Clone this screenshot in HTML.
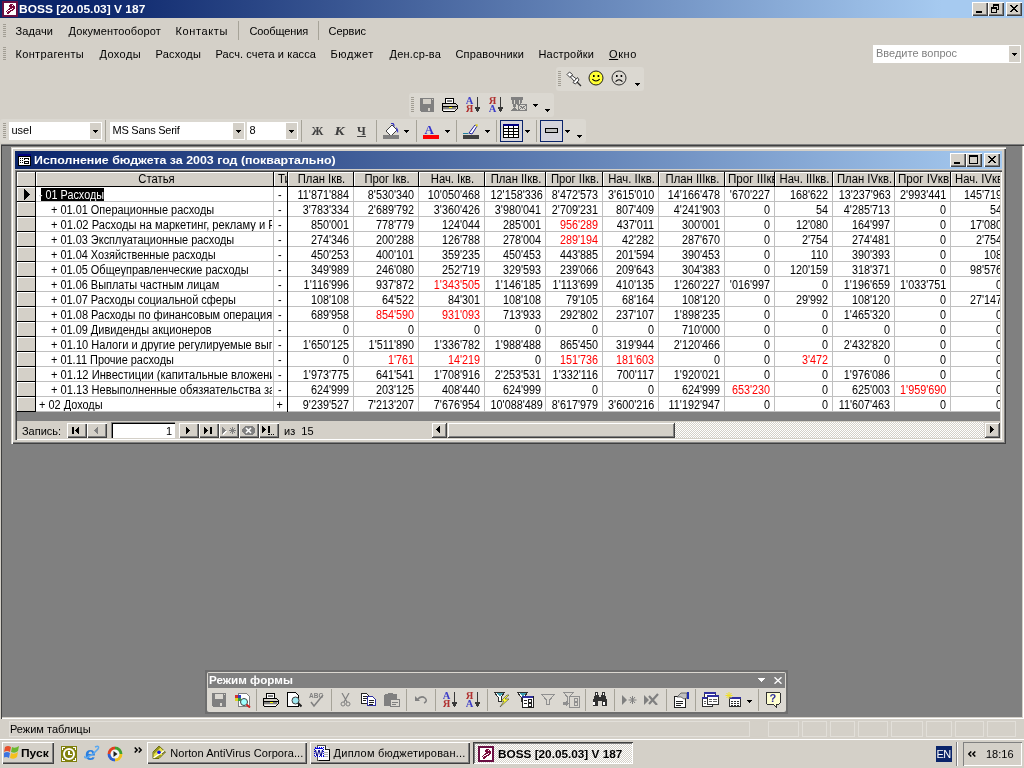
<!DOCTYPE html>
<html><head><meta charset="utf-8"><title>BOSS</title><style>
html,body{margin:0;padding:0}
body{width:1024px;height:768px;overflow:hidden;background:#d4d0c8;position:relative;font-family:"Liberation Sans",sans-serif;font-size:11px}
div,svg{position:absolute;box-sizing:border-box}
.t{white-space:pre}
#root{left:0;top:0;width:1024px;height:768px;will-change:transform;}
</style></head><body>
<div id="root">
<div style="left:0px;top:0px;width:1024px;height:18px;background:linear-gradient(90deg,#0a246a 0%,#0a246a 8%,#a6caf0 92%,#a6caf0 100%);"></div>
<svg style="left:2px;top:1px;" width="16" height="16" viewBox="0 0 16 16" shape-rendering="crispEdges"><rect x="0" y="0" width="16" height="16" fill="#6b0f43"/><rect x="2" y="2" width="12" height="12" fill="#fff"/>
<path d="M7 3h4v1h1v1h1v3h-1v1h-1v1h-2v1h-1v1h-1v1h-2v-1h-1v-2h1v-1h1v-1h1v-1h1v-1h-1v-2h1v-1h1z" fill="#7a0a3c"/>
<path d="M10 4h1v1h-1zM10 7h1v1h-1zM8 8h2v1h-2zM6 9h2v1h-2zM5 10h1v1h-1zM4 11h1v1h-1z" fill="#fff"/></svg>
<div class="t" style="left:19px;top:1.69px;font-size:11px;line-height:15px;color:#fff;font-weight:700;transform:scaleX(1.087);transform-origin:left center;">BOSS [20.05.03] V 187</div>
<div style="left:972px;top:2px;width:16px;height:14px;background:#d4d0c8;box-shadow:inset 1px 1px 0 #fff,inset -1px -1px 0 #404040,inset -2px -2px 0 #808080;"><svg style="left:0px;top:0px;" width="16" height="14" viewBox="0 0 16 14" shape-rendering="crispEdges"><rect x="4" y="9" width="6" height="2" fill="#000"/></svg></div>
<div style="left:988px;top:2px;width:16px;height:14px;background:#d4d0c8;box-shadow:inset 1px 1px 0 #fff,inset -1px -1px 0 #404040,inset -2px -2px 0 #808080;"><svg style="left:0px;top:0px;" width="16" height="14" viewBox="0 0 16 14" shape-rendering="crispEdges"><path d="M5 2h6v6h-2v-1h1v-3h-4v1h-1z" fill="#000"/><path d="M3 5h6v6h-6zM4 7v3h4v-3z" fill="#000" fill-rule="evenodd"/></svg></div>
<div style="left:1006px;top:2px;width:16px;height:14px;background:#d4d0c8;box-shadow:inset 1px 1px 0 #fff,inset -1px -1px 0 #404040,inset -2px -2px 0 #808080;"><svg style="left:0px;top:0px;" width="16" height="14" viewBox="0 0 16 14" shape-rendering="crispEdges"><path d="M4 3h2v1h1v1h2v-1h1v-1h2v1h-1v1h-1v1h-1v1h1v1h1v1h1v1h-2v-1h-1v-1h-2v1h-1v1h-2v-1h1v-1h1v-1h1v-1h-1v-1h-1v-1h-1z" fill="#000"/></svg></div>
<svg style="left:3px;top:24px;" width="3" height="14" viewBox="0 0 3 14" shape-rendering="crispEdges"><rect x="0" y="0" width="3" height="1" fill="#a19d93"/><rect x="0" y="2" width="3" height="1" fill="#a19d93"/><rect x="0" y="4" width="3" height="1" fill="#a19d93"/><rect x="0" y="6" width="3" height="1" fill="#a19d93"/><rect x="0" y="8" width="3" height="1" fill="#a19d93"/><rect x="0" y="10" width="3" height="1" fill="#a19d93"/><rect x="0" y="12" width="3" height="1" fill="#a19d93"/></svg>
<div class="t" style="left:15.5px;top:23.69px;font-size:11px;line-height:15px;color:#000;letter-spacing:0.094px;">Задачи</div>
<div class="t" style="left:68.5px;top:23.69px;font-size:11px;line-height:15px;color:#000;letter-spacing:0.142px;">Документооборот</div>
<div class="t" style="left:175.5px;top:23.69px;font-size:11px;line-height:15px;color:#000;letter-spacing:0.623px;">Контакты</div>
<div class="t" style="left:249.5px;top:23.69px;font-size:11px;line-height:15px;color:#000;letter-spacing:-0.134px;">Сообщения</div>
<div class="t" style="left:328.5px;top:23.69px;font-size:11px;line-height:15px;color:#000;letter-spacing:-0.028px;">Сервис</div>
<div style="left:238px;top:21px;width:1px;height:19px;background:#a6a398;"></div>
<div style="left:318px;top:21px;width:1px;height:19px;background:#a6a398;"></div>
<svg style="left:3px;top:47px;" width="3" height="14" viewBox="0 0 3 14" shape-rendering="crispEdges"><rect x="0" y="0" width="3" height="1" fill="#a19d93"/><rect x="0" y="2" width="3" height="1" fill="#a19d93"/><rect x="0" y="4" width="3" height="1" fill="#a19d93"/><rect x="0" y="6" width="3" height="1" fill="#a19d93"/><rect x="0" y="8" width="3" height="1" fill="#a19d93"/><rect x="0" y="10" width="3" height="1" fill="#a19d93"/><rect x="0" y="12" width="3" height="1" fill="#a19d93"/></svg>
<div class="t" style="left:15.5px;top:46.69px;font-size:11px;line-height:15px;color:#000;letter-spacing:0.338px;">Контрагенты</div>
<div class="t" style="left:99.5px;top:46.69px;font-size:11px;line-height:15px;color:#000;letter-spacing:0.392px;">Доходы</div>
<div class="t" style="left:155.5px;top:46.69px;font-size:11px;line-height:15px;color:#000;letter-spacing:0.19px;">Расходы</div>
<div class="t" style="left:215.5px;top:46.69px;font-size:11px;line-height:15px;color:#000;letter-spacing:0.092px;">Расч. счета и касса</div>
<div class="t" style="left:330.5px;top:46.69px;font-size:11px;line-height:15px;color:#000;letter-spacing:0.617px;">Бюджет</div>
<div class="t" style="left:389.5px;top:46.69px;font-size:11px;line-height:15px;color:#000;letter-spacing:0.187px;">Ден.ср-ва</div>
<div class="t" style="left:455.5px;top:46.69px;font-size:11px;line-height:15px;color:#000;letter-spacing:0.169px;">Справочники</div>
<div class="t" style="left:538.5px;top:46.69px;font-size:11px;line-height:15px;color:#000;letter-spacing:0.174px;">Настройки</div>
<div class="t" style="left:609px;top:46.69px;font-size:11px;line-height:15px;color:#000;letter-spacing:0.609px;"><u>О</u>кно</div>
<div style="left:873px;top:45px;width:148px;height:18px;background:#fff;"></div>
<div style="left:1009px;top:46px;width:11px;height:16px;background:#d4d0c8;"></div>
<svg style="left:1012px;top:53px;" width="5" height="3" viewBox="0 0 5 3" shape-rendering="crispEdges"><path d="M0 0h5v1h-5zM1 1h3v1h-3zM2 2h1v1h-1z" fill="#000"/></svg>
<div class="t" style="left:876px;top:45.69px;font-size:11px;line-height:15px;color:#808080;">Введите вопрос</div>
<div style="left:556px;top:67px;width:88px;height:24px;background:#dbd8d1;border-radius:3px;"></div>
<svg style="left:558px;top:71px;" width="3" height="16" viewBox="0 0 3 16" shape-rendering="crispEdges"><rect x="0" y="0" width="3" height="1" fill="#a19d93"/><rect x="0" y="2" width="3" height="1" fill="#a19d93"/><rect x="0" y="4" width="3" height="1" fill="#a19d93"/><rect x="0" y="6" width="3" height="1" fill="#a19d93"/><rect x="0" y="8" width="3" height="1" fill="#a19d93"/><rect x="0" y="10" width="3" height="1" fill="#a19d93"/><rect x="0" y="12" width="3" height="1" fill="#a19d93"/><rect x="0" y="14" width="3" height="1" fill="#a19d93"/></svg>
<svg style="left:566px;top:71px;" width="16" height="16" viewBox="0 0 16 16" shape-rendering="geometricPrecision"><path d="M1 3.500L3.500 1L6.500 3.500L4 6.500Z" fill="#fff" stroke="#404040" stroke-width="1"/><path d="M4.500 6L6 4.500L10.500 8L8.500 10.500Z" fill="#fff" stroke="#404040" stroke-width="1"/><path d="M7 11.500L11.500 6.500L13 9L9.500 13Z" fill="#fff" stroke="#404040" stroke-width="1"/><path d="M11 11l4 4" stroke="#303030" stroke-width="1.2" fill="none"/></svg>
<svg style="left:588px;top:70px;" width="16" height="16" viewBox="0 0 16 16" shape-rendering="geometricPrecision"><circle cx="8" cy="8" r="7" fill="#ffff33" stroke="#202020" stroke-width="1"/><rect x="5" y="5" width="1.6" height="2" fill="#000"/><rect x="9.6" y="5" width="1.6" height="2" fill="#000"/><path d="M4.3 9.2q3.7 3.6 7.4 0" fill="none" stroke="#000" stroke-width="1.1"/></svg>
<svg style="left:611px;top:70px;" width="16" height="16" viewBox="0 0 16 16" shape-rendering="geometricPrecision"><circle cx="8" cy="8" r="7" fill="none" stroke="#303030" stroke-width="1"/><rect x="5" y="5" width="1.6" height="2" fill="#000"/><rect x="9.6" y="5" width="1.6" height="2" fill="#000"/><path d="M4.6 11.6q3.4 -3.6 6.8 0" fill="none" stroke="#000" stroke-width="1.1"/></svg>
<svg style="left:635px;top:83px;" width="5" height="3" viewBox="0 0 5 3" shape-rendering="crispEdges"><path d="M0 0h5v1h-5zM1 1h3v1h-3zM2 2h1v1h-1z" fill="#000"/></svg>
<div style="left:409px;top:93px;width:145px;height:24px;background:#dbd8d1;border-radius:3px;"></div>
<svg style="left:411px;top:97px;" width="3" height="16" viewBox="0 0 3 16" shape-rendering="crispEdges"><rect x="0" y="0" width="3" height="1" fill="#a19d93"/><rect x="0" y="2" width="3" height="1" fill="#a19d93"/><rect x="0" y="4" width="3" height="1" fill="#a19d93"/><rect x="0" y="6" width="3" height="1" fill="#a19d93"/><rect x="0" y="8" width="3" height="1" fill="#a19d93"/><rect x="0" y="10" width="3" height="1" fill="#a19d93"/><rect x="0" y="12" width="3" height="1" fill="#a19d93"/><rect x="0" y="14" width="3" height="1" fill="#a19d93"/></svg>
<svg style="left:420px;top:98px;" width="14" height="14" viewBox="0 0 14 14" shape-rendering="crispEdges"><path d="M0 0h14v14h-13l-1-1z" fill="#808080"/><rect x="3" y="1" width="8" height="5" fill="#d4d0c8"/><rect x="3" y="9" width="8" height="5" fill="#808080"/><rect x="8" y="10" width="2" height="3" fill="#d4d0c8"/><rect x="12" y="1" width="1" height="1" fill="#d4d0c8"/></svg>
<svg style="left:442px;top:98px;" width="16" height="14" viewBox="0 0 16 14" shape-rendering="crispEdges"><path d="M4 0h8l-1 5h-8z" fill="#fff" stroke="#000" stroke-width="1"/><path d="M5 2h5M4.500 3.500h5" stroke="#808080"/>
<path d="M1 5h12l2 2v4l-2 2h-12l-1-1v-5z" fill="#d4d0c8" stroke="#000"/><path d="M0 8h15" stroke="#000"/><rect x="1" y="9" width="13" height="2" fill="#808080"/><rect x="7" y="9" width="3" height="1" fill="#ffff00"/><path d="M2 12h11" stroke="#fff"/></svg>
<svg style="left:466px;top:97px;" width="15" height="16" viewBox="0 0 15 16" shape-rendering="geometricPrecision"><text x="3.500" y="7" text-anchor="middle" font-family="Liberation Serif" font-weight="700" font-size="10.500" fill="#3c3cc8">A</text><text x="3.500" y="15" text-anchor="middle" font-family="Liberation Serif" font-weight="700" font-size="10.500" fill="#b03030">Я</text><path d="M11 0h1v11h-1zM9 10h5v1h-5zM9 11h5v1h-5zM10 12h3v1h-3zM10 13h3v1h-3zM11 14h1v1h-1z" fill="#383838" shape-rendering="crispEdges"/></svg>
<svg style="left:489px;top:97px;" width="15" height="16" viewBox="0 0 15 16" shape-rendering="geometricPrecision"><text x="3.500" y="7" text-anchor="middle" font-family="Liberation Serif" font-weight="700" font-size="10.500" fill="#b03030">Я</text><text x="3.500" y="15" text-anchor="middle" font-family="Liberation Serif" font-weight="700" font-size="10.500" fill="#3c3cc8">A</text><path d="M11 0h1v11h-1zM9 10h5v1h-5zM9 11h5v1h-5zM10 12h3v1h-3zM10 13h3v1h-3zM11 14h1v1h-1z" fill="#383838" shape-rendering="crispEdges"/></svg>
<svg style="left:511px;top:97px;" width="17" height="15" viewBox="0 0 17 15" shape-rendering="crispEdges"><path d="M0 0h12v3h-1l-1 7h-3l-1-5-1 5h-3l-1-7h-1z" fill="#808080"/><path d="M3 3h1v4h-1zM8 3h1v4h-1z" fill="#dbd8d1"/><path d="M0 14l3.500-4 3.500 4z" fill="#808080"/><rect x="7.500" y="7.500" width="8" height="6" fill="#dbd8d1" stroke="#808080"/><path d="M8 8l3.500 3 3.500-3M8 13l3-3M15 13l-3-3" stroke="#808080" fill="none"/></svg>
<svg style="left:533px;top:104px;" width="5" height="3" viewBox="0 0 5 3" shape-rendering="crispEdges"><path d="M0 0h5v1h-5zM1 1h3v1h-3zM2 2h1v1h-1z" fill="#000"/></svg>
<svg style="left:545px;top:109px;" width="5" height="3" viewBox="0 0 5 3" shape-rendering="crispEdges"><path d="M0 0h5v1h-5zM1 1h3v1h-3zM2 2h1v1h-1z" fill="#000"/></svg>
<div style="left:0px;top:119px;width:586px;height:24px;background:#dbd8d1;border-radius:3px;"></div>
<svg style="left:3px;top:123px;" width="3" height="16" viewBox="0 0 3 16" shape-rendering="crispEdges"><rect x="0" y="0" width="3" height="1" fill="#a19d93"/><rect x="0" y="2" width="3" height="1" fill="#a19d93"/><rect x="0" y="4" width="3" height="1" fill="#a19d93"/><rect x="0" y="6" width="3" height="1" fill="#a19d93"/><rect x="0" y="8" width="3" height="1" fill="#a19d93"/><rect x="0" y="10" width="3" height="1" fill="#a19d93"/><rect x="0" y="12" width="3" height="1" fill="#a19d93"/><rect x="0" y="14" width="3" height="1" fill="#a19d93"/></svg>
<div style="left:9px;top:122px;width:93px;height:18px;background:#fff;"></div><div style="left:90px;top:123px;width:11px;height:16px;background:#d4d0c8;"></div><svg style="left:93px;top:130px;" width="5" height="3" viewBox="0 0 5 3" shape-rendering="crispEdges"><path d="M0 0h5v1h-5zM1 1h3v1h-3zM2 2h1v1h-1z" fill="#000"/></svg><div class="t" style="left:11.5px;top:122.69px;font-size:11px;line-height:15px;color:#000;">usel</div>
<div style="left:105px;top:120px;width:1px;height:22px;background:#a6a398;"></div>
<div style="left:110px;top:122px;width:135px;height:18px;background:#fff;"></div><div style="left:233px;top:123px;width:11px;height:16px;background:#d4d0c8;"></div><svg style="left:236px;top:130px;" width="5" height="3" viewBox="0 0 5 3" shape-rendering="crispEdges"><path d="M0 0h5v1h-5zM1 1h3v1h-3zM2 2h1v1h-1z" fill="#000"/></svg><div class="t" style="left:112.5px;top:122.69px;font-size:11px;line-height:15px;color:#000;letter-spacing:-0.25px;">MS Sans Serif</div>
<div style="left:247px;top:122px;width:51px;height:18px;background:#fff;"></div><div style="left:286px;top:123px;width:11px;height:16px;background:#d4d0c8;"></div><svg style="left:289px;top:130px;" width="5" height="3" viewBox="0 0 5 3" shape-rendering="crispEdges"><path d="M0 0h5v1h-5zM1 1h3v1h-3zM2 2h1v1h-1z" fill="#000"/></svg><div class="t" style="left:249.5px;top:122.69px;font-size:11px;line-height:15px;color:#000;">8</div>
<div style="left:301px;top:120px;width:1px;height:22px;background:#a6a398;"></div>
<div class="t" style="left:311px;top:122.84px;font-size:12px;line-height:16px;color:#404040;font-weight:700;width:13px;text-align:center;font-family:'Liberation Serif';">Ж</div>
<div class="t" style="left:333px;top:122.00px;font-size:13px;line-height:17px;color:#404040;font-weight:700;font-style:italic;width:13px;text-align:center;transform:scaleX(1.15);transform-origin:center center;font-family:'Liberation Serif';">К</div>
<div class="t" style="left:355px;top:122.84px;font-size:12px;line-height:16px;color:#404040;font-weight:700;width:13px;text-align:center;font-family:'Liberation Serif';text-decoration:underline;">Ч</div>
<div style="left:376px;top:120px;width:1px;height:22px;background:#a6a398;"></div>
<svg style="left:383px;top:123px;" width="16" height="16" viewBox="0 0 16 16" shape-rendering="geometricPrecision"><path d="M3 8l6-6 5 5-6 6z" fill="#fff" stroke="#404040" stroke-width="1"/><path d="M8 0.500q3-1 3 3" fill="none" stroke="#3030c0" stroke-width="1.2"/><path d="M13 4q3 2 2 6q-2-2-2-6z" fill="#4040d0"/><rect x="0" y="12" width="16" height="4" fill="#808080"/></svg>
<svg style="left:404px;top:130px;" width="5" height="3" viewBox="0 0 5 3" shape-rendering="crispEdges"><path d="M0 0h5v1h-5zM1 1h3v1h-3zM2 2h1v1h-1z" fill="#000"/></svg>
<div style="left:416px;top:120px;width:1px;height:22px;background:#a6a398;"></div>
<svg style="left:423px;top:124px;" width="16" height="15" viewBox="0 0 16 15" shape-rendering="geometricPrecision"><text x="1.500" y="10" font-family="Liberation Serif" font-weight="700" font-size="13" fill="#3333cc">A</text><rect x="0" y="11" width="16" height="4" fill="#ff0000"/></svg>
<svg style="left:445px;top:130px;" width="5" height="3" viewBox="0 0 5 3" shape-rendering="crispEdges"><path d="M0 0h5v1h-5zM1 1h3v1h-3zM2 2h1v1h-1z" fill="#000"/></svg>
<div style="left:456px;top:120px;width:1px;height:22px;background:#a6a398;"></div>
<svg style="left:463px;top:124px;" width="16" height="15" viewBox="0 0 16 15" shape-rendering="geometricPrecision"><path d="M6 9l6-8 2 1-5 8z" fill="#fff" stroke="#2020a0" stroke-width="1"/><path d="M12 1l2-1 1 1-1 2z" fill="#e0d020"/><path d="M0 9h5l1 1h-6z" fill="#2080a0"/><rect x="0" y="11" width="16" height="4" fill="#404040"/></svg>
<svg style="left:485px;top:130px;" width="5" height="3" viewBox="0 0 5 3" shape-rendering="crispEdges"><path d="M0 0h5v1h-5zM1 1h3v1h-3zM2 2h1v1h-1z" fill="#000"/></svg>
<div style="left:496px;top:120px;width:1px;height:22px;background:#a6a398;"></div>
<div style="left:500px;top:120px;width:23px;height:22px;background:#d6d5dc;border:1px solid #0a246a;"></div>
<svg style="left:503px;top:124px;" width="16" height="14" viewBox="0 0 16 14" shape-rendering="crispEdges"><rect x="0" y="0" width="16" height="14" fill="#000"/><rect x="0" y="0" width="16" height="2" fill="#000080"/><rect x="1" y="2" width="4" height="2" fill="#fff"/><rect x="6" y="2" width="4" height="2" fill="#fff"/><rect x="11" y="2" width="4" height="2" fill="#fff"/><rect x="1" y="5" width="4" height="2" fill="#fff"/><rect x="6" y="5" width="4" height="2" fill="#fff"/><rect x="11" y="5" width="4" height="2" fill="#fff"/><rect x="1" y="8" width="4" height="2" fill="#fff"/><rect x="6" y="8" width="4" height="2" fill="#fff"/><rect x="11" y="8" width="4" height="2" fill="#fff"/><rect x="1" y="11" width="4" height="2" fill="#fff"/><rect x="6" y="11" width="4" height="2" fill="#fff"/><rect x="11" y="11" width="4" height="2" fill="#fff"/></svg>
<svg style="left:525px;top:130px;" width="5" height="3" viewBox="0 0 5 3" shape-rendering="crispEdges"><path d="M0 0h5v1h-5zM1 1h3v1h-3zM2 2h1v1h-1z" fill="#000"/></svg>
<div style="left:536px;top:120px;width:1px;height:22px;background:#a6a398;"></div>
<div style="left:540px;top:120px;width:23px;height:22px;background:#d6d5dc;border:1px solid #0a246a;"></div>
<div style="left:545px;top:128px;width:13px;height:5px;background:#c0c0c0;border:1px solid #000;"></div>
<svg style="left:565px;top:130px;" width="5" height="3" viewBox="0 0 5 3" shape-rendering="crispEdges"><path d="M0 0h5v1h-5zM1 1h3v1h-3zM2 2h1v1h-1z" fill="#000"/></svg>
<svg style="left:577px;top:135px;" width="5" height="3" viewBox="0 0 5 3" shape-rendering="crispEdges"><path d="M0 0h5v1h-5zM1 1h3v1h-3zM2 2h1v1h-1z" fill="#000"/></svg>
<div style="left:0px;top:143px;width:1024px;height:1px;background:#d4d0c8;"></div>
<div style="left:0px;top:144px;width:1024px;height:575px;background:#808080;box-shadow:inset 1px 1px 0 #808080,inset 2px 2px 0 #404040,inset -1px -1px 0 #fff,inset -2px -2px 0 #d4d0c8;"></div>
<div style="left:0px;top:144px;width:1px;height:575px;background:#d4d0c8;"></div>
<div style="left:11px;top:147px;width:995px;height:297px;background:#d4d0c8;box-shadow:inset 1px 1px 0 #d4d0c8,inset 2px 2px 0 #fff,inset -1px -1px 0 #404040,inset -2px -2px 0 #808080;"></div>
<div style="left:15px;top:151px;width:987px;height:18px;background:linear-gradient(90deg,#0a246a 0%,#a6caf0 100%);"></div>
<svg style="left:18px;top:154px;" width="13" height="12" viewBox="0 0 13 12" shape-rendering="crispEdges"><rect x="0" y="0" width="13" height="12" fill="#000"/><rect x="0" y="0" width="13" height="2" fill="#000080"/><rect x="1" y="3" width="11" height="8" fill="#fff"/>
<path d="M2 4h3v1h-3zM2 6h3v1h-3zM2 8h3v1h-3z" fill="#000"/><path d="M3 4h1v1h-1zM3 6h1v1h-1zM3 8h1v1h-1z" fill="#fff"/>
<rect x="6" y="4" width="5" height="2" fill="#000"/><rect x="7" y="4.500" width="3" height="1" fill="#fff"/><rect x="6" y="7" width="5" height="3" fill="#000"/><rect x="7" y="8" width="3" height="1" fill="#fff"/></svg>
<div class="t" style="left:34px;top:152.69px;font-size:11px;line-height:15px;color:#fff;font-weight:700;transform:scaleX(1.126);transform-origin:left center;">Исполнение бюджета за 2003 год (поквартально)</div>
<div style="left:950px;top:153px;width:16px;height:14px;background:#d4d0c8;box-shadow:inset 1px 1px 0 #fff,inset -1px -1px 0 #404040,inset -2px -2px 0 #808080;"><svg style="left:0px;top:0px;" width="16" height="14" viewBox="0 0 16 14" shape-rendering="crispEdges"><rect x="4" y="9" width="6" height="2" fill="#000"/></svg></div>
<div style="left:966px;top:153px;width:16px;height:14px;background:#d4d0c8;box-shadow:inset 1px 1px 0 #fff,inset -1px -1px 0 #404040,inset -2px -2px 0 #808080;"><svg style="left:0px;top:0px;" width="16" height="14" viewBox="0 0 16 14" shape-rendering="crispEdges"><path d="M3 2h9v9h-9zM4 4v6h7v-6z" fill="#000" fill-rule="evenodd"/></svg></div>
<div style="left:984px;top:153px;width:16px;height:14px;background:#d4d0c8;box-shadow:inset 1px 1px 0 #fff,inset -1px -1px 0 #404040,inset -2px -2px 0 #808080;"><svg style="left:0px;top:0px;" width="16" height="14" viewBox="0 0 16 14" shape-rendering="crispEdges"><path d="M4 3h2v1h1v1h2v-1h1v-1h2v1h-1v1h-1v1h-1v1h1v1h1v1h1v1h-2v-1h-1v-1h-2v1h-1v1h-2v-1h1v-1h1v-1h1v-1h-1v-1h-1v-1h-1z" fill="#000"/></svg></div>
<div style="left:15px;top:170px;width:987px;height:270px;box-shadow:inset 1px 1px 0 #808080,inset 2px 2px 0 #404040,inset -1px -1px 0 #fff,inset -2px -2px 0 #d4d0c8;"></div>
<div style="left:17px;top:172px;width:983px;height:249px;overflow:hidden;"><div style="left:19px;top:15px;width:964px;height:225px;background:#fff;"></div><div style="left:0px;top:240px;width:983px;height:9px;background:#808080;"></div><div style="left:0px;top:0px;width:983px;height:15px;background:#000;"></div><div style="left:0px;top:0px;width:18px;height:14px;background:#d4d0c8;box-shadow:inset 1px 1px 0 #fff;"></div><div style="left:19px;top:0px;width:237px;height:14px;background:#d4d0c8;box-shadow:inset 1px 1px 0 #fff;overflow:hidden;"></div><div style="left:19px;top:0px;width:237px;height:14px;overflow:hidden;"><div class="t" style="left:2px;top:-1.16px;font-size:12px;line-height:16px;color:#000;width:237px;text-align:center;transform:scaleX(0.94);transform-origin:center center;">Статья</div></div><div style="left:257px;top:0px;width:13px;height:14px;background:#d4d0c8;box-shadow:inset 1px 1px 0 #fff;overflow:hidden;"></div><div style="left:257px;top:0px;width:13px;height:14px;overflow:hidden;"><div class="t" style="left:4px;top:-1.16px;font-size:12px;line-height:16px;color:#000;transform:scaleX(0.94);transform-origin:left center;">Ти</div></div><div style="left:271px;top:0px;width:65px;height:14px;background:#d4d0c8;box-shadow:inset 1px 1px 0 #fff;overflow:hidden;"></div><div style="left:271px;top:0px;width:65px;height:14px;overflow:hidden;"><div class="t" style="left:0.5px;top:-1.16px;font-size:12px;line-height:16px;color:#000;width:65px;text-align:center;transform:scaleX(0.94);transform-origin:center center;">План Iкв.</div></div><div style="left:337px;top:0px;width:64px;height:14px;background:#d4d0c8;box-shadow:inset 1px 1px 0 #fff;overflow:hidden;"></div><div style="left:337px;top:0px;width:64px;height:14px;overflow:hidden;"><div class="t" style="left:0.5px;top:-1.16px;font-size:12px;line-height:16px;color:#000;width:64px;text-align:center;transform:scaleX(0.94);transform-origin:center center;">Прог Iкв.</div></div><div style="left:402px;top:0px;width:65px;height:14px;background:#d4d0c8;box-shadow:inset 1px 1px 0 #fff;overflow:hidden;"></div><div style="left:402px;top:0px;width:65px;height:14px;overflow:hidden;"><div class="t" style="left:0.5px;top:-1.16px;font-size:12px;line-height:16px;color:#000;width:65px;text-align:center;transform:scaleX(0.94);transform-origin:center center;">Нач. Iкв.</div></div><div style="left:468px;top:0px;width:60px;height:14px;background:#d4d0c8;box-shadow:inset 1px 1px 0 #fff;overflow:hidden;"></div><div style="left:468px;top:0px;width:60px;height:14px;overflow:hidden;"><div class="t" style="left:0.5px;top:-1.16px;font-size:12px;line-height:16px;color:#000;width:60px;text-align:center;transform:scaleX(0.94);transform-origin:center center;">План IIкв.</div></div><div style="left:529px;top:0px;width:56px;height:14px;background:#d4d0c8;box-shadow:inset 1px 1px 0 #fff;overflow:hidden;"></div><div style="left:529px;top:0px;width:56px;height:14px;overflow:hidden;"><div class="t" style="left:0.5px;top:-1.16px;font-size:12px;line-height:16px;color:#000;width:56px;text-align:center;transform:scaleX(0.94);transform-origin:center center;">Прог IIкв.</div></div><div style="left:586px;top:0px;width:55px;height:14px;background:#d4d0c8;box-shadow:inset 1px 1px 0 #fff;overflow:hidden;"></div><div style="left:586px;top:0px;width:55px;height:14px;overflow:hidden;"><div class="t" style="left:0.5px;top:-1.16px;font-size:12px;line-height:16px;color:#000;width:55px;text-align:center;transform:scaleX(0.94);transform-origin:center center;">Нач. IIкв.</div></div><div style="left:642px;top:0px;width:65px;height:14px;background:#d4d0c8;box-shadow:inset 1px 1px 0 #fff;overflow:hidden;"></div><div style="left:642px;top:0px;width:65px;height:14px;overflow:hidden;"><div class="t" style="left:0.5px;top:-1.16px;font-size:12px;line-height:16px;color:#000;width:65px;text-align:center;transform:scaleX(0.94);transform-origin:center center;">План IIIкв.</div></div><div style="left:708px;top:0px;width:49px;height:14px;background:#d4d0c8;box-shadow:inset 1px 1px 0 #fff;overflow:hidden;"></div><div style="left:708px;top:0px;width:49px;height:14px;overflow:hidden;"><div class="t" style="left:3px;top:-1.16px;font-size:12px;line-height:16px;color:#000;transform:scaleX(0.97);transform-origin:left center;">Прог IIIкв.</div></div><div style="left:758px;top:0px;width:57px;height:14px;background:#d4d0c8;box-shadow:inset 1px 1px 0 #fff;overflow:hidden;"></div><div style="left:758px;top:0px;width:57px;height:14px;overflow:hidden;"><div class="t" style="left:0.5px;top:-1.16px;font-size:12px;line-height:16px;color:#000;width:57px;text-align:center;transform:scaleX(0.94);transform-origin:center center;">Нач. IIIкв.</div></div><div style="left:816px;top:0px;width:61px;height:14px;background:#d4d0c8;box-shadow:inset 1px 1px 0 #fff;overflow:hidden;"></div><div style="left:816px;top:0px;width:61px;height:14px;overflow:hidden;"><div class="t" style="left:0.5px;top:-1.16px;font-size:12px;line-height:16px;color:#000;width:61px;text-align:center;transform:scaleX(0.94);transform-origin:center center;">План IVкв.</div></div><div style="left:878px;top:0px;width:55px;height:14px;background:#d4d0c8;box-shadow:inset 1px 1px 0 #fff;overflow:hidden;"></div><div style="left:878px;top:0px;width:55px;height:14px;overflow:hidden;"><div class="t" style="left:3px;top:-1.16px;font-size:12px;line-height:16px;color:#000;transform:scaleX(0.97);transform-origin:left center;">Прог IVкв.</div></div><div style="left:934px;top:0px;width:55px;height:14px;background:#d4d0c8;box-shadow:inset 1px 1px 0 #fff;overflow:hidden;"></div><div style="left:934px;top:0px;width:55px;height:14px;overflow:hidden;"><div class="t" style="left:4px;top:-1.16px;font-size:12px;line-height:16px;color:#000;transform:scaleX(0.94);transform-origin:left center;">Нач. IVкв.</div></div><div style="left:0px;top:15px;width:18px;height:15px;background:#000;"></div><div style="left:0px;top:15px;width:18px;height:14px;background:#d4d0c8;box-shadow:inset 1px 1px 0 #fff;"></div><div style="left:19px;top:29px;width:964px;height:1px;background:#c0c0c0;"></div><div style="left:19px;top:15px;width:236px;height:14px;overflow:hidden;"><div class="t" style="left:3px;top:-0.16px;font-size:12px;line-height:16px;color:#000;transform:scaleX(0.9);transform-origin:left center;">-</div><div style="left:5px;top:1px;width:63px;height:13px;background:#000;"></div><div class="t" style="left:3px;top:-0.16px;font-size:12px;line-height:16px;color:#fff;transform:scaleX(0.9);transform-origin:left center;">- 01 Расходы</div></div><div class="t" style="left:257px;top:14.84px;font-size:12px;line-height:16px;color:#000;width:11.5px;text-align:center;transform:scaleX(0.9);transform-origin:center center;">-</div><div style="left:271px;top:15px;width:65px;height:14px;overflow:hidden;"><div class="t" style="left:0px;top:-0.16px;font-size:12px;line-height:16px;color:#000;width:61px;text-align:right;transform:scaleX(0.9);transform-origin:right center;">11&#39;871&#39;884</div></div><div style="left:337px;top:15px;width:64px;height:14px;overflow:hidden;"><div class="t" style="left:0px;top:-0.16px;font-size:12px;line-height:16px;color:#000;width:60px;text-align:right;transform:scaleX(0.9);transform-origin:right center;">8&#39;530&#39;340</div></div><div style="left:402px;top:15px;width:65px;height:14px;overflow:hidden;"><div class="t" style="left:0px;top:-0.16px;font-size:12px;line-height:16px;color:#000;width:61px;text-align:right;transform:scaleX(0.9);transform-origin:right center;">10&#39;050&#39;468</div></div><div style="left:468px;top:15px;width:60px;height:14px;overflow:hidden;"><div class="t" style="left:0px;top:-0.16px;font-size:12px;line-height:16px;color:#000;width:56px;text-align:right;transform:scaleX(0.9);transform-origin:right center;">12&#39;158&#39;336</div></div><div style="left:529px;top:15px;width:56px;height:14px;overflow:hidden;"><div class="t" style="left:0px;top:-0.16px;font-size:12px;line-height:16px;color:#000;width:52px;text-align:right;transform:scaleX(0.9);transform-origin:right center;">8&#39;472&#39;573</div></div><div style="left:586px;top:15px;width:55px;height:14px;overflow:hidden;"><div class="t" style="left:0px;top:-0.16px;font-size:12px;line-height:16px;color:#000;width:51px;text-align:right;transform:scaleX(0.9);transform-origin:right center;">3&#39;615&#39;010</div></div><div style="left:642px;top:15px;width:65px;height:14px;overflow:hidden;"><div class="t" style="left:0px;top:-0.16px;font-size:12px;line-height:16px;color:#000;width:61px;text-align:right;transform:scaleX(0.9);transform-origin:right center;">14&#39;166&#39;478</div></div><div style="left:708px;top:15px;width:49px;height:14px;overflow:hidden;"><div class="t" style="left:0px;top:-0.16px;font-size:12px;line-height:16px;color:#000;width:45px;text-align:right;transform:scaleX(0.9);transform-origin:right center;">&#39;670&#39;227</div></div><div style="left:758px;top:15px;width:57px;height:14px;overflow:hidden;"><div class="t" style="left:0px;top:-0.16px;font-size:12px;line-height:16px;color:#000;width:53px;text-align:right;transform:scaleX(0.9);transform-origin:right center;">168&#39;622</div></div><div style="left:816px;top:15px;width:61px;height:14px;overflow:hidden;"><div class="t" style="left:0px;top:-0.16px;font-size:12px;line-height:16px;color:#000;width:57px;text-align:right;transform:scaleX(0.9);transform-origin:right center;">13&#39;237&#39;963</div></div><div style="left:878px;top:15px;width:55px;height:14px;overflow:hidden;"><div class="t" style="left:0px;top:-0.16px;font-size:12px;line-height:16px;color:#000;width:51px;text-align:right;transform:scaleX(0.9);transform-origin:right center;">2&#39;993&#39;441</div></div><div style="left:934px;top:15px;width:55px;height:14px;overflow:hidden;"><div class="t" style="left:0px;top:-0.16px;font-size:12px;line-height:16px;color:#000;width:51px;text-align:right;transform:scaleX(0.9);transform-origin:right center;">145&#39;719</div></div><div style="left:0px;top:30px;width:18px;height:15px;background:#000;"></div><div style="left:0px;top:30px;width:18px;height:14px;background:#d4d0c8;box-shadow:inset 1px 1px 0 #fff;"></div><div style="left:19px;top:44px;width:964px;height:1px;background:#c0c0c0;"></div><div style="left:19px;top:30px;width:236px;height:14px;overflow:hidden;"><div class="t" style="left:15px;top:-0.16px;font-size:12px;line-height:16px;color:#000;transform:scaleX(0.912);transform-origin:left center;">+ 01.01 Операционные расходы</div></div><div class="t" style="left:257px;top:29.84px;font-size:12px;line-height:16px;color:#000;width:11.5px;text-align:center;transform:scaleX(0.9);transform-origin:center center;">-</div><div style="left:271px;top:30px;width:65px;height:14px;overflow:hidden;"><div class="t" style="left:0px;top:-0.16px;font-size:12px;line-height:16px;color:#000;width:61px;text-align:right;transform:scaleX(0.9);transform-origin:right center;">3&#39;783&#39;334</div></div><div style="left:337px;top:30px;width:64px;height:14px;overflow:hidden;"><div class="t" style="left:0px;top:-0.16px;font-size:12px;line-height:16px;color:#000;width:60px;text-align:right;transform:scaleX(0.9);transform-origin:right center;">2&#39;689&#39;792</div></div><div style="left:402px;top:30px;width:65px;height:14px;overflow:hidden;"><div class="t" style="left:0px;top:-0.16px;font-size:12px;line-height:16px;color:#000;width:61px;text-align:right;transform:scaleX(0.9);transform-origin:right center;">3&#39;360&#39;426</div></div><div style="left:468px;top:30px;width:60px;height:14px;overflow:hidden;"><div class="t" style="left:0px;top:-0.16px;font-size:12px;line-height:16px;color:#000;width:56px;text-align:right;transform:scaleX(0.9);transform-origin:right center;">3&#39;980&#39;041</div></div><div style="left:529px;top:30px;width:56px;height:14px;overflow:hidden;"><div class="t" style="left:0px;top:-0.16px;font-size:12px;line-height:16px;color:#000;width:52px;text-align:right;transform:scaleX(0.9);transform-origin:right center;">2&#39;709&#39;231</div></div><div style="left:586px;top:30px;width:55px;height:14px;overflow:hidden;"><div class="t" style="left:0px;top:-0.16px;font-size:12px;line-height:16px;color:#000;width:51px;text-align:right;transform:scaleX(0.9);transform-origin:right center;">807&#39;409</div></div><div style="left:642px;top:30px;width:65px;height:14px;overflow:hidden;"><div class="t" style="left:0px;top:-0.16px;font-size:12px;line-height:16px;color:#000;width:61px;text-align:right;transform:scaleX(0.9);transform-origin:right center;">4&#39;241&#39;903</div></div><div style="left:708px;top:30px;width:49px;height:14px;overflow:hidden;"><div class="t" style="left:0px;top:-0.16px;font-size:12px;line-height:16px;color:#000;width:45px;text-align:right;transform:scaleX(0.9);transform-origin:right center;">0</div></div><div style="left:758px;top:30px;width:57px;height:14px;overflow:hidden;"><div class="t" style="left:0px;top:-0.16px;font-size:12px;line-height:16px;color:#000;width:53px;text-align:right;transform:scaleX(0.9);transform-origin:right center;">54</div></div><div style="left:816px;top:30px;width:61px;height:14px;overflow:hidden;"><div class="t" style="left:0px;top:-0.16px;font-size:12px;line-height:16px;color:#000;width:57px;text-align:right;transform:scaleX(0.9);transform-origin:right center;">4&#39;285&#39;713</div></div><div style="left:878px;top:30px;width:55px;height:14px;overflow:hidden;"><div class="t" style="left:0px;top:-0.16px;font-size:12px;line-height:16px;color:#000;width:51px;text-align:right;transform:scaleX(0.9);transform-origin:right center;">0</div></div><div style="left:934px;top:30px;width:55px;height:14px;overflow:hidden;"><div class="t" style="left:0px;top:-0.16px;font-size:12px;line-height:16px;color:#000;width:51px;text-align:right;transform:scaleX(0.9);transform-origin:right center;">54</div></div><div style="left:0px;top:45px;width:18px;height:15px;background:#000;"></div><div style="left:0px;top:45px;width:18px;height:14px;background:#d4d0c8;box-shadow:inset 1px 1px 0 #fff;"></div><div style="left:19px;top:59px;width:964px;height:1px;background:#c0c0c0;"></div><div style="left:19px;top:45px;width:236px;height:14px;overflow:hidden;"><div class="t" style="left:15px;top:-0.16px;font-size:12px;line-height:16px;color:#000;transform:scaleX(0.93);transform-origin:left center;">+ 01.02 Расходы на маркетинг, рекламу и PR</div></div><div class="t" style="left:257px;top:44.84px;font-size:12px;line-height:16px;color:#000;width:11.5px;text-align:center;transform:scaleX(0.9);transform-origin:center center;">-</div><div style="left:271px;top:45px;width:65px;height:14px;overflow:hidden;"><div class="t" style="left:0px;top:-0.16px;font-size:12px;line-height:16px;color:#000;width:61px;text-align:right;transform:scaleX(0.9);transform-origin:right center;">850&#39;001</div></div><div style="left:337px;top:45px;width:64px;height:14px;overflow:hidden;"><div class="t" style="left:0px;top:-0.16px;font-size:12px;line-height:16px;color:#000;width:60px;text-align:right;transform:scaleX(0.9);transform-origin:right center;">778&#39;779</div></div><div style="left:402px;top:45px;width:65px;height:14px;overflow:hidden;"><div class="t" style="left:0px;top:-0.16px;font-size:12px;line-height:16px;color:#000;width:61px;text-align:right;transform:scaleX(0.9);transform-origin:right center;">124&#39;044</div></div><div style="left:468px;top:45px;width:60px;height:14px;overflow:hidden;"><div class="t" style="left:0px;top:-0.16px;font-size:12px;line-height:16px;color:#000;width:56px;text-align:right;transform:scaleX(0.9);transform-origin:right center;">285&#39;001</div></div><div style="left:529px;top:45px;width:56px;height:14px;overflow:hidden;"><div class="t" style="left:0px;top:-0.16px;font-size:12px;line-height:16px;color:#ff0000;width:52px;text-align:right;transform:scaleX(0.9);transform-origin:right center;">956&#39;289</div></div><div style="left:586px;top:45px;width:55px;height:14px;overflow:hidden;"><div class="t" style="left:0px;top:-0.16px;font-size:12px;line-height:16px;color:#000;width:51px;text-align:right;transform:scaleX(0.9);transform-origin:right center;">437&#39;011</div></div><div style="left:642px;top:45px;width:65px;height:14px;overflow:hidden;"><div class="t" style="left:0px;top:-0.16px;font-size:12px;line-height:16px;color:#000;width:61px;text-align:right;transform:scaleX(0.9);transform-origin:right center;">300&#39;001</div></div><div style="left:708px;top:45px;width:49px;height:14px;overflow:hidden;"><div class="t" style="left:0px;top:-0.16px;font-size:12px;line-height:16px;color:#000;width:45px;text-align:right;transform:scaleX(0.9);transform-origin:right center;">0</div></div><div style="left:758px;top:45px;width:57px;height:14px;overflow:hidden;"><div class="t" style="left:0px;top:-0.16px;font-size:12px;line-height:16px;color:#000;width:53px;text-align:right;transform:scaleX(0.9);transform-origin:right center;">12&#39;080</div></div><div style="left:816px;top:45px;width:61px;height:14px;overflow:hidden;"><div class="t" style="left:0px;top:-0.16px;font-size:12px;line-height:16px;color:#000;width:57px;text-align:right;transform:scaleX(0.9);transform-origin:right center;">164&#39;997</div></div><div style="left:878px;top:45px;width:55px;height:14px;overflow:hidden;"><div class="t" style="left:0px;top:-0.16px;font-size:12px;line-height:16px;color:#000;width:51px;text-align:right;transform:scaleX(0.9);transform-origin:right center;">0</div></div><div style="left:934px;top:45px;width:55px;height:14px;overflow:hidden;"><div class="t" style="left:0px;top:-0.16px;font-size:12px;line-height:16px;color:#000;width:51px;text-align:right;transform:scaleX(0.9);transform-origin:right center;">17&#39;080</div></div><div style="left:0px;top:60px;width:18px;height:15px;background:#000;"></div><div style="left:0px;top:60px;width:18px;height:14px;background:#d4d0c8;box-shadow:inset 1px 1px 0 #fff;"></div><div style="left:19px;top:74px;width:964px;height:1px;background:#c0c0c0;"></div><div style="left:19px;top:60px;width:236px;height:14px;overflow:hidden;"><div class="t" style="left:15px;top:-0.16px;font-size:12px;line-height:16px;color:#000;transform:scaleX(0.912);transform-origin:left center;">+ 01.03 Эксплуатационные расходы</div></div><div class="t" style="left:257px;top:59.84px;font-size:12px;line-height:16px;color:#000;width:11.5px;text-align:center;transform:scaleX(0.9);transform-origin:center center;">-</div><div style="left:271px;top:60px;width:65px;height:14px;overflow:hidden;"><div class="t" style="left:0px;top:-0.16px;font-size:12px;line-height:16px;color:#000;width:61px;text-align:right;transform:scaleX(0.9);transform-origin:right center;">274&#39;346</div></div><div style="left:337px;top:60px;width:64px;height:14px;overflow:hidden;"><div class="t" style="left:0px;top:-0.16px;font-size:12px;line-height:16px;color:#000;width:60px;text-align:right;transform:scaleX(0.9);transform-origin:right center;">200&#39;288</div></div><div style="left:402px;top:60px;width:65px;height:14px;overflow:hidden;"><div class="t" style="left:0px;top:-0.16px;font-size:12px;line-height:16px;color:#000;width:61px;text-align:right;transform:scaleX(0.9);transform-origin:right center;">126&#39;788</div></div><div style="left:468px;top:60px;width:60px;height:14px;overflow:hidden;"><div class="t" style="left:0px;top:-0.16px;font-size:12px;line-height:16px;color:#000;width:56px;text-align:right;transform:scaleX(0.9);transform-origin:right center;">278&#39;004</div></div><div style="left:529px;top:60px;width:56px;height:14px;overflow:hidden;"><div class="t" style="left:0px;top:-0.16px;font-size:12px;line-height:16px;color:#ff0000;width:52px;text-align:right;transform:scaleX(0.9);transform-origin:right center;">289&#39;194</div></div><div style="left:586px;top:60px;width:55px;height:14px;overflow:hidden;"><div class="t" style="left:0px;top:-0.16px;font-size:12px;line-height:16px;color:#000;width:51px;text-align:right;transform:scaleX(0.9);transform-origin:right center;">42&#39;282</div></div><div style="left:642px;top:60px;width:65px;height:14px;overflow:hidden;"><div class="t" style="left:0px;top:-0.16px;font-size:12px;line-height:16px;color:#000;width:61px;text-align:right;transform:scaleX(0.9);transform-origin:right center;">287&#39;670</div></div><div style="left:708px;top:60px;width:49px;height:14px;overflow:hidden;"><div class="t" style="left:0px;top:-0.16px;font-size:12px;line-height:16px;color:#000;width:45px;text-align:right;transform:scaleX(0.9);transform-origin:right center;">0</div></div><div style="left:758px;top:60px;width:57px;height:14px;overflow:hidden;"><div class="t" style="left:0px;top:-0.16px;font-size:12px;line-height:16px;color:#000;width:53px;text-align:right;transform:scaleX(0.9);transform-origin:right center;">2&#39;754</div></div><div style="left:816px;top:60px;width:61px;height:14px;overflow:hidden;"><div class="t" style="left:0px;top:-0.16px;font-size:12px;line-height:16px;color:#000;width:57px;text-align:right;transform:scaleX(0.9);transform-origin:right center;">274&#39;481</div></div><div style="left:878px;top:60px;width:55px;height:14px;overflow:hidden;"><div class="t" style="left:0px;top:-0.16px;font-size:12px;line-height:16px;color:#000;width:51px;text-align:right;transform:scaleX(0.9);transform-origin:right center;">0</div></div><div style="left:934px;top:60px;width:55px;height:14px;overflow:hidden;"><div class="t" style="left:0px;top:-0.16px;font-size:12px;line-height:16px;color:#000;width:51px;text-align:right;transform:scaleX(0.9);transform-origin:right center;">2&#39;754</div></div><div style="left:0px;top:75px;width:18px;height:15px;background:#000;"></div><div style="left:0px;top:75px;width:18px;height:14px;background:#d4d0c8;box-shadow:inset 1px 1px 0 #fff;"></div><div style="left:19px;top:89px;width:964px;height:1px;background:#c0c0c0;"></div><div style="left:19px;top:75px;width:236px;height:14px;overflow:hidden;"><div class="t" style="left:15px;top:-0.16px;font-size:12px;line-height:16px;color:#000;transform:scaleX(0.912);transform-origin:left center;">+ 01.04 Хозяйственные расходы</div></div><div class="t" style="left:257px;top:74.84px;font-size:12px;line-height:16px;color:#000;width:11.5px;text-align:center;transform:scaleX(0.9);transform-origin:center center;">-</div><div style="left:271px;top:75px;width:65px;height:14px;overflow:hidden;"><div class="t" style="left:0px;top:-0.16px;font-size:12px;line-height:16px;color:#000;width:61px;text-align:right;transform:scaleX(0.9);transform-origin:right center;">450&#39;253</div></div><div style="left:337px;top:75px;width:64px;height:14px;overflow:hidden;"><div class="t" style="left:0px;top:-0.16px;font-size:12px;line-height:16px;color:#000;width:60px;text-align:right;transform:scaleX(0.9);transform-origin:right center;">400&#39;101</div></div><div style="left:402px;top:75px;width:65px;height:14px;overflow:hidden;"><div class="t" style="left:0px;top:-0.16px;font-size:12px;line-height:16px;color:#000;width:61px;text-align:right;transform:scaleX(0.9);transform-origin:right center;">359&#39;235</div></div><div style="left:468px;top:75px;width:60px;height:14px;overflow:hidden;"><div class="t" style="left:0px;top:-0.16px;font-size:12px;line-height:16px;color:#000;width:56px;text-align:right;transform:scaleX(0.9);transform-origin:right center;">450&#39;453</div></div><div style="left:529px;top:75px;width:56px;height:14px;overflow:hidden;"><div class="t" style="left:0px;top:-0.16px;font-size:12px;line-height:16px;color:#000;width:52px;text-align:right;transform:scaleX(0.9);transform-origin:right center;">443&#39;885</div></div><div style="left:586px;top:75px;width:55px;height:14px;overflow:hidden;"><div class="t" style="left:0px;top:-0.16px;font-size:12px;line-height:16px;color:#000;width:51px;text-align:right;transform:scaleX(0.9);transform-origin:right center;">201&#39;594</div></div><div style="left:642px;top:75px;width:65px;height:14px;overflow:hidden;"><div class="t" style="left:0px;top:-0.16px;font-size:12px;line-height:16px;color:#000;width:61px;text-align:right;transform:scaleX(0.9);transform-origin:right center;">390&#39;453</div></div><div style="left:708px;top:75px;width:49px;height:14px;overflow:hidden;"><div class="t" style="left:0px;top:-0.16px;font-size:12px;line-height:16px;color:#000;width:45px;text-align:right;transform:scaleX(0.9);transform-origin:right center;">0</div></div><div style="left:758px;top:75px;width:57px;height:14px;overflow:hidden;"><div class="t" style="left:0px;top:-0.16px;font-size:12px;line-height:16px;color:#000;width:53px;text-align:right;transform:scaleX(0.9);transform-origin:right center;">110</div></div><div style="left:816px;top:75px;width:61px;height:14px;overflow:hidden;"><div class="t" style="left:0px;top:-0.16px;font-size:12px;line-height:16px;color:#000;width:57px;text-align:right;transform:scaleX(0.9);transform-origin:right center;">390&#39;393</div></div><div style="left:878px;top:75px;width:55px;height:14px;overflow:hidden;"><div class="t" style="left:0px;top:-0.16px;font-size:12px;line-height:16px;color:#000;width:51px;text-align:right;transform:scaleX(0.9);transform-origin:right center;">0</div></div><div style="left:934px;top:75px;width:55px;height:14px;overflow:hidden;"><div class="t" style="left:0px;top:-0.16px;font-size:12px;line-height:16px;color:#000;width:51px;text-align:right;transform:scaleX(0.9);transform-origin:right center;">108</div></div><div style="left:0px;top:90px;width:18px;height:15px;background:#000;"></div><div style="left:0px;top:90px;width:18px;height:14px;background:#d4d0c8;box-shadow:inset 1px 1px 0 #fff;"></div><div style="left:19px;top:104px;width:964px;height:1px;background:#c0c0c0;"></div><div style="left:19px;top:90px;width:236px;height:14px;overflow:hidden;"><div class="t" style="left:15px;top:-0.16px;font-size:12px;line-height:16px;color:#000;transform:scaleX(0.912);transform-origin:left center;">+ 01.05 Общеуправленческие расходы</div></div><div class="t" style="left:257px;top:89.84px;font-size:12px;line-height:16px;color:#000;width:11.5px;text-align:center;transform:scaleX(0.9);transform-origin:center center;">-</div><div style="left:271px;top:90px;width:65px;height:14px;overflow:hidden;"><div class="t" style="left:0px;top:-0.16px;font-size:12px;line-height:16px;color:#000;width:61px;text-align:right;transform:scaleX(0.9);transform-origin:right center;">349&#39;989</div></div><div style="left:337px;top:90px;width:64px;height:14px;overflow:hidden;"><div class="t" style="left:0px;top:-0.16px;font-size:12px;line-height:16px;color:#000;width:60px;text-align:right;transform:scaleX(0.9);transform-origin:right center;">246&#39;080</div></div><div style="left:402px;top:90px;width:65px;height:14px;overflow:hidden;"><div class="t" style="left:0px;top:-0.16px;font-size:12px;line-height:16px;color:#000;width:61px;text-align:right;transform:scaleX(0.9);transform-origin:right center;">252&#39;719</div></div><div style="left:468px;top:90px;width:60px;height:14px;overflow:hidden;"><div class="t" style="left:0px;top:-0.16px;font-size:12px;line-height:16px;color:#000;width:56px;text-align:right;transform:scaleX(0.9);transform-origin:right center;">329&#39;593</div></div><div style="left:529px;top:90px;width:56px;height:14px;overflow:hidden;"><div class="t" style="left:0px;top:-0.16px;font-size:12px;line-height:16px;color:#000;width:52px;text-align:right;transform:scaleX(0.9);transform-origin:right center;">239&#39;066</div></div><div style="left:586px;top:90px;width:55px;height:14px;overflow:hidden;"><div class="t" style="left:0px;top:-0.16px;font-size:12px;line-height:16px;color:#000;width:51px;text-align:right;transform:scaleX(0.9);transform-origin:right center;">209&#39;643</div></div><div style="left:642px;top:90px;width:65px;height:14px;overflow:hidden;"><div class="t" style="left:0px;top:-0.16px;font-size:12px;line-height:16px;color:#000;width:61px;text-align:right;transform:scaleX(0.9);transform-origin:right center;">304&#39;383</div></div><div style="left:708px;top:90px;width:49px;height:14px;overflow:hidden;"><div class="t" style="left:0px;top:-0.16px;font-size:12px;line-height:16px;color:#000;width:45px;text-align:right;transform:scaleX(0.9);transform-origin:right center;">0</div></div><div style="left:758px;top:90px;width:57px;height:14px;overflow:hidden;"><div class="t" style="left:0px;top:-0.16px;font-size:12px;line-height:16px;color:#000;width:53px;text-align:right;transform:scaleX(0.9);transform-origin:right center;">120&#39;159</div></div><div style="left:816px;top:90px;width:61px;height:14px;overflow:hidden;"><div class="t" style="left:0px;top:-0.16px;font-size:12px;line-height:16px;color:#000;width:57px;text-align:right;transform:scaleX(0.9);transform-origin:right center;">318&#39;371</div></div><div style="left:878px;top:90px;width:55px;height:14px;overflow:hidden;"><div class="t" style="left:0px;top:-0.16px;font-size:12px;line-height:16px;color:#000;width:51px;text-align:right;transform:scaleX(0.9);transform-origin:right center;">0</div></div><div style="left:934px;top:90px;width:55px;height:14px;overflow:hidden;"><div class="t" style="left:0px;top:-0.16px;font-size:12px;line-height:16px;color:#000;width:51px;text-align:right;transform:scaleX(0.9);transform-origin:right center;">98&#39;576</div></div><div style="left:0px;top:105px;width:18px;height:15px;background:#000;"></div><div style="left:0px;top:105px;width:18px;height:14px;background:#d4d0c8;box-shadow:inset 1px 1px 0 #fff;"></div><div style="left:19px;top:119px;width:964px;height:1px;background:#c0c0c0;"></div><div style="left:19px;top:105px;width:236px;height:14px;overflow:hidden;"><div class="t" style="left:15px;top:-0.16px;font-size:12px;line-height:16px;color:#000;transform:scaleX(0.912);transform-origin:left center;">+ 01.06 Выплаты частным лицам</div></div><div class="t" style="left:257px;top:104.84px;font-size:12px;line-height:16px;color:#000;width:11.5px;text-align:center;transform:scaleX(0.9);transform-origin:center center;">-</div><div style="left:271px;top:105px;width:65px;height:14px;overflow:hidden;"><div class="t" style="left:0px;top:-0.16px;font-size:12px;line-height:16px;color:#000;width:61px;text-align:right;transform:scaleX(0.9);transform-origin:right center;">1&#39;116&#39;996</div></div><div style="left:337px;top:105px;width:64px;height:14px;overflow:hidden;"><div class="t" style="left:0px;top:-0.16px;font-size:12px;line-height:16px;color:#000;width:60px;text-align:right;transform:scaleX(0.9);transform-origin:right center;">937&#39;872</div></div><div style="left:402px;top:105px;width:65px;height:14px;overflow:hidden;"><div class="t" style="left:0px;top:-0.16px;font-size:12px;line-height:16px;color:#ff0000;width:61px;text-align:right;transform:scaleX(0.9);transform-origin:right center;">1&#39;343&#39;505</div></div><div style="left:468px;top:105px;width:60px;height:14px;overflow:hidden;"><div class="t" style="left:0px;top:-0.16px;font-size:12px;line-height:16px;color:#000;width:56px;text-align:right;transform:scaleX(0.9);transform-origin:right center;">1&#39;146&#39;185</div></div><div style="left:529px;top:105px;width:56px;height:14px;overflow:hidden;"><div class="t" style="left:0px;top:-0.16px;font-size:12px;line-height:16px;color:#000;width:52px;text-align:right;transform:scaleX(0.9);transform-origin:right center;">1&#39;113&#39;699</div></div><div style="left:586px;top:105px;width:55px;height:14px;overflow:hidden;"><div class="t" style="left:0px;top:-0.16px;font-size:12px;line-height:16px;color:#000;width:51px;text-align:right;transform:scaleX(0.9);transform-origin:right center;">410&#39;135</div></div><div style="left:642px;top:105px;width:65px;height:14px;overflow:hidden;"><div class="t" style="left:0px;top:-0.16px;font-size:12px;line-height:16px;color:#000;width:61px;text-align:right;transform:scaleX(0.9);transform-origin:right center;">1&#39;260&#39;227</div></div><div style="left:708px;top:105px;width:49px;height:14px;overflow:hidden;"><div class="t" style="left:0px;top:-0.16px;font-size:12px;line-height:16px;color:#000;width:45px;text-align:right;transform:scaleX(0.9);transform-origin:right center;">&#39;016&#39;997</div></div><div style="left:758px;top:105px;width:57px;height:14px;overflow:hidden;"><div class="t" style="left:0px;top:-0.16px;font-size:12px;line-height:16px;color:#000;width:53px;text-align:right;transform:scaleX(0.9);transform-origin:right center;">0</div></div><div style="left:816px;top:105px;width:61px;height:14px;overflow:hidden;"><div class="t" style="left:0px;top:-0.16px;font-size:12px;line-height:16px;color:#000;width:57px;text-align:right;transform:scaleX(0.9);transform-origin:right center;">1&#39;196&#39;659</div></div><div style="left:878px;top:105px;width:55px;height:14px;overflow:hidden;"><div class="t" style="left:0px;top:-0.16px;font-size:12px;line-height:16px;color:#000;width:51px;text-align:right;transform:scaleX(0.9);transform-origin:right center;">1&#39;033&#39;751</div></div><div style="left:934px;top:105px;width:55px;height:14px;overflow:hidden;"><div class="t" style="left:0px;top:-0.16px;font-size:12px;line-height:16px;color:#000;width:51px;text-align:right;transform:scaleX(0.9);transform-origin:right center;">0</div></div><div style="left:0px;top:120px;width:18px;height:15px;background:#000;"></div><div style="left:0px;top:120px;width:18px;height:14px;background:#d4d0c8;box-shadow:inset 1px 1px 0 #fff;"></div><div style="left:19px;top:134px;width:964px;height:1px;background:#c0c0c0;"></div><div style="left:19px;top:120px;width:236px;height:14px;overflow:hidden;"><div class="t" style="left:15px;top:-0.16px;font-size:12px;line-height:16px;color:#000;transform:scaleX(0.912);transform-origin:left center;">+ 01.07 Расходы социальной сферы</div></div><div class="t" style="left:257px;top:119.84px;font-size:12px;line-height:16px;color:#000;width:11.5px;text-align:center;transform:scaleX(0.9);transform-origin:center center;">-</div><div style="left:271px;top:120px;width:65px;height:14px;overflow:hidden;"><div class="t" style="left:0px;top:-0.16px;font-size:12px;line-height:16px;color:#000;width:61px;text-align:right;transform:scaleX(0.9);transform-origin:right center;">108&#39;108</div></div><div style="left:337px;top:120px;width:64px;height:14px;overflow:hidden;"><div class="t" style="left:0px;top:-0.16px;font-size:12px;line-height:16px;color:#000;width:60px;text-align:right;transform:scaleX(0.9);transform-origin:right center;">64&#39;522</div></div><div style="left:402px;top:120px;width:65px;height:14px;overflow:hidden;"><div class="t" style="left:0px;top:-0.16px;font-size:12px;line-height:16px;color:#000;width:61px;text-align:right;transform:scaleX(0.9);transform-origin:right center;">84&#39;301</div></div><div style="left:468px;top:120px;width:60px;height:14px;overflow:hidden;"><div class="t" style="left:0px;top:-0.16px;font-size:12px;line-height:16px;color:#000;width:56px;text-align:right;transform:scaleX(0.9);transform-origin:right center;">108&#39;108</div></div><div style="left:529px;top:120px;width:56px;height:14px;overflow:hidden;"><div class="t" style="left:0px;top:-0.16px;font-size:12px;line-height:16px;color:#000;width:52px;text-align:right;transform:scaleX(0.9);transform-origin:right center;">79&#39;105</div></div><div style="left:586px;top:120px;width:55px;height:14px;overflow:hidden;"><div class="t" style="left:0px;top:-0.16px;font-size:12px;line-height:16px;color:#000;width:51px;text-align:right;transform:scaleX(0.9);transform-origin:right center;">68&#39;164</div></div><div style="left:642px;top:120px;width:65px;height:14px;overflow:hidden;"><div class="t" style="left:0px;top:-0.16px;font-size:12px;line-height:16px;color:#000;width:61px;text-align:right;transform:scaleX(0.9);transform-origin:right center;">108&#39;120</div></div><div style="left:708px;top:120px;width:49px;height:14px;overflow:hidden;"><div class="t" style="left:0px;top:-0.16px;font-size:12px;line-height:16px;color:#000;width:45px;text-align:right;transform:scaleX(0.9);transform-origin:right center;">0</div></div><div style="left:758px;top:120px;width:57px;height:14px;overflow:hidden;"><div class="t" style="left:0px;top:-0.16px;font-size:12px;line-height:16px;color:#000;width:53px;text-align:right;transform:scaleX(0.9);transform-origin:right center;">29&#39;992</div></div><div style="left:816px;top:120px;width:61px;height:14px;overflow:hidden;"><div class="t" style="left:0px;top:-0.16px;font-size:12px;line-height:16px;color:#000;width:57px;text-align:right;transform:scaleX(0.9);transform-origin:right center;">108&#39;120</div></div><div style="left:878px;top:120px;width:55px;height:14px;overflow:hidden;"><div class="t" style="left:0px;top:-0.16px;font-size:12px;line-height:16px;color:#000;width:51px;text-align:right;transform:scaleX(0.9);transform-origin:right center;">0</div></div><div style="left:934px;top:120px;width:55px;height:14px;overflow:hidden;"><div class="t" style="left:0px;top:-0.16px;font-size:12px;line-height:16px;color:#000;width:51px;text-align:right;transform:scaleX(0.9);transform-origin:right center;">27&#39;147</div></div><div style="left:0px;top:135px;width:18px;height:15px;background:#000;"></div><div style="left:0px;top:135px;width:18px;height:14px;background:#d4d0c8;box-shadow:inset 1px 1px 0 #fff;"></div><div style="left:19px;top:149px;width:964px;height:1px;background:#c0c0c0;"></div><div style="left:19px;top:135px;width:236px;height:14px;overflow:hidden;"><div class="t" style="left:15px;top:-0.16px;font-size:12px;line-height:16px;color:#000;transform:scaleX(0.918);transform-origin:left center;">+ 01.08 Расходы по финансовым операциям</div></div><div class="t" style="left:257px;top:134.84px;font-size:12px;line-height:16px;color:#000;width:11.5px;text-align:center;transform:scaleX(0.9);transform-origin:center center;">-</div><div style="left:271px;top:135px;width:65px;height:14px;overflow:hidden;"><div class="t" style="left:0px;top:-0.16px;font-size:12px;line-height:16px;color:#000;width:61px;text-align:right;transform:scaleX(0.9);transform-origin:right center;">689&#39;958</div></div><div style="left:337px;top:135px;width:64px;height:14px;overflow:hidden;"><div class="t" style="left:0px;top:-0.16px;font-size:12px;line-height:16px;color:#ff0000;width:60px;text-align:right;transform:scaleX(0.9);transform-origin:right center;">854&#39;590</div></div><div style="left:402px;top:135px;width:65px;height:14px;overflow:hidden;"><div class="t" style="left:0px;top:-0.16px;font-size:12px;line-height:16px;color:#ff0000;width:61px;text-align:right;transform:scaleX(0.9);transform-origin:right center;">931&#39;093</div></div><div style="left:468px;top:135px;width:60px;height:14px;overflow:hidden;"><div class="t" style="left:0px;top:-0.16px;font-size:12px;line-height:16px;color:#000;width:56px;text-align:right;transform:scaleX(0.9);transform-origin:right center;">713&#39;933</div></div><div style="left:529px;top:135px;width:56px;height:14px;overflow:hidden;"><div class="t" style="left:0px;top:-0.16px;font-size:12px;line-height:16px;color:#000;width:52px;text-align:right;transform:scaleX(0.9);transform-origin:right center;">292&#39;802</div></div><div style="left:586px;top:135px;width:55px;height:14px;overflow:hidden;"><div class="t" style="left:0px;top:-0.16px;font-size:12px;line-height:16px;color:#000;width:51px;text-align:right;transform:scaleX(0.9);transform-origin:right center;">237&#39;107</div></div><div style="left:642px;top:135px;width:65px;height:14px;overflow:hidden;"><div class="t" style="left:0px;top:-0.16px;font-size:12px;line-height:16px;color:#000;width:61px;text-align:right;transform:scaleX(0.9);transform-origin:right center;">1&#39;898&#39;235</div></div><div style="left:708px;top:135px;width:49px;height:14px;overflow:hidden;"><div class="t" style="left:0px;top:-0.16px;font-size:12px;line-height:16px;color:#000;width:45px;text-align:right;transform:scaleX(0.9);transform-origin:right center;">0</div></div><div style="left:758px;top:135px;width:57px;height:14px;overflow:hidden;"><div class="t" style="left:0px;top:-0.16px;font-size:12px;line-height:16px;color:#000;width:53px;text-align:right;transform:scaleX(0.9);transform-origin:right center;">0</div></div><div style="left:816px;top:135px;width:61px;height:14px;overflow:hidden;"><div class="t" style="left:0px;top:-0.16px;font-size:12px;line-height:16px;color:#000;width:57px;text-align:right;transform:scaleX(0.9);transform-origin:right center;">1&#39;465&#39;320</div></div><div style="left:878px;top:135px;width:55px;height:14px;overflow:hidden;"><div class="t" style="left:0px;top:-0.16px;font-size:12px;line-height:16px;color:#000;width:51px;text-align:right;transform:scaleX(0.9);transform-origin:right center;">0</div></div><div style="left:934px;top:135px;width:55px;height:14px;overflow:hidden;"><div class="t" style="left:0px;top:-0.16px;font-size:12px;line-height:16px;color:#000;width:51px;text-align:right;transform:scaleX(0.9);transform-origin:right center;">0</div></div><div style="left:0px;top:150px;width:18px;height:15px;background:#000;"></div><div style="left:0px;top:150px;width:18px;height:14px;background:#d4d0c8;box-shadow:inset 1px 1px 0 #fff;"></div><div style="left:19px;top:164px;width:964px;height:1px;background:#c0c0c0;"></div><div style="left:19px;top:150px;width:236px;height:14px;overflow:hidden;"><div class="t" style="left:15px;top:-0.16px;font-size:12px;line-height:16px;color:#000;transform:scaleX(0.912);transform-origin:left center;">+ 01.09 Дивиденды акционеров</div></div><div class="t" style="left:257px;top:149.84px;font-size:12px;line-height:16px;color:#000;width:11.5px;text-align:center;transform:scaleX(0.9);transform-origin:center center;">-</div><div style="left:271px;top:150px;width:65px;height:14px;overflow:hidden;"><div class="t" style="left:0px;top:-0.16px;font-size:12px;line-height:16px;color:#000;width:61px;text-align:right;transform:scaleX(0.9);transform-origin:right center;">0</div></div><div style="left:337px;top:150px;width:64px;height:14px;overflow:hidden;"><div class="t" style="left:0px;top:-0.16px;font-size:12px;line-height:16px;color:#000;width:60px;text-align:right;transform:scaleX(0.9);transform-origin:right center;">0</div></div><div style="left:402px;top:150px;width:65px;height:14px;overflow:hidden;"><div class="t" style="left:0px;top:-0.16px;font-size:12px;line-height:16px;color:#000;width:61px;text-align:right;transform:scaleX(0.9);transform-origin:right center;">0</div></div><div style="left:468px;top:150px;width:60px;height:14px;overflow:hidden;"><div class="t" style="left:0px;top:-0.16px;font-size:12px;line-height:16px;color:#000;width:56px;text-align:right;transform:scaleX(0.9);transform-origin:right center;">0</div></div><div style="left:529px;top:150px;width:56px;height:14px;overflow:hidden;"><div class="t" style="left:0px;top:-0.16px;font-size:12px;line-height:16px;color:#000;width:52px;text-align:right;transform:scaleX(0.9);transform-origin:right center;">0</div></div><div style="left:586px;top:150px;width:55px;height:14px;overflow:hidden;"><div class="t" style="left:0px;top:-0.16px;font-size:12px;line-height:16px;color:#000;width:51px;text-align:right;transform:scaleX(0.9);transform-origin:right center;">0</div></div><div style="left:642px;top:150px;width:65px;height:14px;overflow:hidden;"><div class="t" style="left:0px;top:-0.16px;font-size:12px;line-height:16px;color:#000;width:61px;text-align:right;transform:scaleX(0.9);transform-origin:right center;">710&#39;000</div></div><div style="left:708px;top:150px;width:49px;height:14px;overflow:hidden;"><div class="t" style="left:0px;top:-0.16px;font-size:12px;line-height:16px;color:#000;width:45px;text-align:right;transform:scaleX(0.9);transform-origin:right center;">0</div></div><div style="left:758px;top:150px;width:57px;height:14px;overflow:hidden;"><div class="t" style="left:0px;top:-0.16px;font-size:12px;line-height:16px;color:#000;width:53px;text-align:right;transform:scaleX(0.9);transform-origin:right center;">0</div></div><div style="left:816px;top:150px;width:61px;height:14px;overflow:hidden;"><div class="t" style="left:0px;top:-0.16px;font-size:12px;line-height:16px;color:#000;width:57px;text-align:right;transform:scaleX(0.9);transform-origin:right center;">0</div></div><div style="left:878px;top:150px;width:55px;height:14px;overflow:hidden;"><div class="t" style="left:0px;top:-0.16px;font-size:12px;line-height:16px;color:#000;width:51px;text-align:right;transform:scaleX(0.9);transform-origin:right center;">0</div></div><div style="left:934px;top:150px;width:55px;height:14px;overflow:hidden;"><div class="t" style="left:0px;top:-0.16px;font-size:12px;line-height:16px;color:#000;width:51px;text-align:right;transform:scaleX(0.9);transform-origin:right center;">0</div></div><div style="left:0px;top:165px;width:18px;height:15px;background:#000;"></div><div style="left:0px;top:165px;width:18px;height:14px;background:#d4d0c8;box-shadow:inset 1px 1px 0 #fff;"></div><div style="left:19px;top:179px;width:964px;height:1px;background:#c0c0c0;"></div><div style="left:19px;top:165px;width:236px;height:14px;overflow:hidden;"><div class="t" style="left:15px;top:-0.16px;font-size:12px;line-height:16px;color:#000;transform:scaleX(0.922);transform-origin:left center;">+ 01.10 Налоги и другие регулируемые выплаты</div></div><div class="t" style="left:257px;top:164.84px;font-size:12px;line-height:16px;color:#000;width:11.5px;text-align:center;transform:scaleX(0.9);transform-origin:center center;">-</div><div style="left:271px;top:165px;width:65px;height:14px;overflow:hidden;"><div class="t" style="left:0px;top:-0.16px;font-size:12px;line-height:16px;color:#000;width:61px;text-align:right;transform:scaleX(0.9);transform-origin:right center;">1&#39;650&#39;125</div></div><div style="left:337px;top:165px;width:64px;height:14px;overflow:hidden;"><div class="t" style="left:0px;top:-0.16px;font-size:12px;line-height:16px;color:#000;width:60px;text-align:right;transform:scaleX(0.9);transform-origin:right center;">1&#39;511&#39;890</div></div><div style="left:402px;top:165px;width:65px;height:14px;overflow:hidden;"><div class="t" style="left:0px;top:-0.16px;font-size:12px;line-height:16px;color:#000;width:61px;text-align:right;transform:scaleX(0.9);transform-origin:right center;">1&#39;336&#39;782</div></div><div style="left:468px;top:165px;width:60px;height:14px;overflow:hidden;"><div class="t" style="left:0px;top:-0.16px;font-size:12px;line-height:16px;color:#000;width:56px;text-align:right;transform:scaleX(0.9);transform-origin:right center;">1&#39;988&#39;488</div></div><div style="left:529px;top:165px;width:56px;height:14px;overflow:hidden;"><div class="t" style="left:0px;top:-0.16px;font-size:12px;line-height:16px;color:#000;width:52px;text-align:right;transform:scaleX(0.9);transform-origin:right center;">865&#39;450</div></div><div style="left:586px;top:165px;width:55px;height:14px;overflow:hidden;"><div class="t" style="left:0px;top:-0.16px;font-size:12px;line-height:16px;color:#000;width:51px;text-align:right;transform:scaleX(0.9);transform-origin:right center;">319&#39;944</div></div><div style="left:642px;top:165px;width:65px;height:14px;overflow:hidden;"><div class="t" style="left:0px;top:-0.16px;font-size:12px;line-height:16px;color:#000;width:61px;text-align:right;transform:scaleX(0.9);transform-origin:right center;">2&#39;120&#39;466</div></div><div style="left:708px;top:165px;width:49px;height:14px;overflow:hidden;"><div class="t" style="left:0px;top:-0.16px;font-size:12px;line-height:16px;color:#000;width:45px;text-align:right;transform:scaleX(0.9);transform-origin:right center;">0</div></div><div style="left:758px;top:165px;width:57px;height:14px;overflow:hidden;"><div class="t" style="left:0px;top:-0.16px;font-size:12px;line-height:16px;color:#000;width:53px;text-align:right;transform:scaleX(0.9);transform-origin:right center;">0</div></div><div style="left:816px;top:165px;width:61px;height:14px;overflow:hidden;"><div class="t" style="left:0px;top:-0.16px;font-size:12px;line-height:16px;color:#000;width:57px;text-align:right;transform:scaleX(0.9);transform-origin:right center;">2&#39;432&#39;820</div></div><div style="left:878px;top:165px;width:55px;height:14px;overflow:hidden;"><div class="t" style="left:0px;top:-0.16px;font-size:12px;line-height:16px;color:#000;width:51px;text-align:right;transform:scaleX(0.9);transform-origin:right center;">0</div></div><div style="left:934px;top:165px;width:55px;height:14px;overflow:hidden;"><div class="t" style="left:0px;top:-0.16px;font-size:12px;line-height:16px;color:#000;width:51px;text-align:right;transform:scaleX(0.9);transform-origin:right center;">0</div></div><div style="left:0px;top:180px;width:18px;height:15px;background:#000;"></div><div style="left:0px;top:180px;width:18px;height:14px;background:#d4d0c8;box-shadow:inset 1px 1px 0 #fff;"></div><div style="left:19px;top:194px;width:964px;height:1px;background:#c0c0c0;"></div><div style="left:19px;top:180px;width:236px;height:14px;overflow:hidden;"><div class="t" style="left:15px;top:-0.16px;font-size:12px;line-height:16px;color:#000;transform:scaleX(0.912);transform-origin:left center;">+ 01.11 Прочие расходы</div></div><div class="t" style="left:257px;top:179.84px;font-size:12px;line-height:16px;color:#000;width:11.5px;text-align:center;transform:scaleX(0.9);transform-origin:center center;">-</div><div style="left:271px;top:180px;width:65px;height:14px;overflow:hidden;"><div class="t" style="left:0px;top:-0.16px;font-size:12px;line-height:16px;color:#000;width:61px;text-align:right;transform:scaleX(0.9);transform-origin:right center;">0</div></div><div style="left:337px;top:180px;width:64px;height:14px;overflow:hidden;"><div class="t" style="left:0px;top:-0.16px;font-size:12px;line-height:16px;color:#ff0000;width:60px;text-align:right;transform:scaleX(0.9);transform-origin:right center;">1&#39;761</div></div><div style="left:402px;top:180px;width:65px;height:14px;overflow:hidden;"><div class="t" style="left:0px;top:-0.16px;font-size:12px;line-height:16px;color:#ff0000;width:61px;text-align:right;transform:scaleX(0.9);transform-origin:right center;">14&#39;219</div></div><div style="left:468px;top:180px;width:60px;height:14px;overflow:hidden;"><div class="t" style="left:0px;top:-0.16px;font-size:12px;line-height:16px;color:#000;width:56px;text-align:right;transform:scaleX(0.9);transform-origin:right center;">0</div></div><div style="left:529px;top:180px;width:56px;height:14px;overflow:hidden;"><div class="t" style="left:0px;top:-0.16px;font-size:12px;line-height:16px;color:#ff0000;width:52px;text-align:right;transform:scaleX(0.9);transform-origin:right center;">151&#39;736</div></div><div style="left:586px;top:180px;width:55px;height:14px;overflow:hidden;"><div class="t" style="left:0px;top:-0.16px;font-size:12px;line-height:16px;color:#ff0000;width:51px;text-align:right;transform:scaleX(0.9);transform-origin:right center;">181&#39;603</div></div><div style="left:642px;top:180px;width:65px;height:14px;overflow:hidden;"><div class="t" style="left:0px;top:-0.16px;font-size:12px;line-height:16px;color:#000;width:61px;text-align:right;transform:scaleX(0.9);transform-origin:right center;">0</div></div><div style="left:708px;top:180px;width:49px;height:14px;overflow:hidden;"><div class="t" style="left:0px;top:-0.16px;font-size:12px;line-height:16px;color:#000;width:45px;text-align:right;transform:scaleX(0.9);transform-origin:right center;">0</div></div><div style="left:758px;top:180px;width:57px;height:14px;overflow:hidden;"><div class="t" style="left:0px;top:-0.16px;font-size:12px;line-height:16px;color:#ff0000;width:53px;text-align:right;transform:scaleX(0.9);transform-origin:right center;">3&#39;472</div></div><div style="left:816px;top:180px;width:61px;height:14px;overflow:hidden;"><div class="t" style="left:0px;top:-0.16px;font-size:12px;line-height:16px;color:#000;width:57px;text-align:right;transform:scaleX(0.9);transform-origin:right center;">0</div></div><div style="left:878px;top:180px;width:55px;height:14px;overflow:hidden;"><div class="t" style="left:0px;top:-0.16px;font-size:12px;line-height:16px;color:#000;width:51px;text-align:right;transform:scaleX(0.9);transform-origin:right center;">0</div></div><div style="left:934px;top:180px;width:55px;height:14px;overflow:hidden;"><div class="t" style="left:0px;top:-0.16px;font-size:12px;line-height:16px;color:#000;width:51px;text-align:right;transform:scaleX(0.9);transform-origin:right center;">0</div></div><div style="left:0px;top:195px;width:18px;height:15px;background:#000;"></div><div style="left:0px;top:195px;width:18px;height:14px;background:#d4d0c8;box-shadow:inset 1px 1px 0 #fff;"></div><div style="left:19px;top:209px;width:964px;height:1px;background:#c0c0c0;"></div><div style="left:19px;top:195px;width:236px;height:14px;overflow:hidden;"><div class="t" style="left:15px;top:-0.16px;font-size:12px;line-height:16px;color:#000;transform:scaleX(0.93);transform-origin:left center;">+ 01.12 Инвестиции (капитальные вложения)</div></div><div class="t" style="left:257px;top:194.84px;font-size:12px;line-height:16px;color:#000;width:11.5px;text-align:center;transform:scaleX(0.9);transform-origin:center center;">-</div><div style="left:271px;top:195px;width:65px;height:14px;overflow:hidden;"><div class="t" style="left:0px;top:-0.16px;font-size:12px;line-height:16px;color:#000;width:61px;text-align:right;transform:scaleX(0.9);transform-origin:right center;">1&#39;973&#39;775</div></div><div style="left:337px;top:195px;width:64px;height:14px;overflow:hidden;"><div class="t" style="left:0px;top:-0.16px;font-size:12px;line-height:16px;color:#000;width:60px;text-align:right;transform:scaleX(0.9);transform-origin:right center;">641&#39;541</div></div><div style="left:402px;top:195px;width:65px;height:14px;overflow:hidden;"><div class="t" style="left:0px;top:-0.16px;font-size:12px;line-height:16px;color:#000;width:61px;text-align:right;transform:scaleX(0.9);transform-origin:right center;">1&#39;708&#39;916</div></div><div style="left:468px;top:195px;width:60px;height:14px;overflow:hidden;"><div class="t" style="left:0px;top:-0.16px;font-size:12px;line-height:16px;color:#000;width:56px;text-align:right;transform:scaleX(0.9);transform-origin:right center;">2&#39;253&#39;531</div></div><div style="left:529px;top:195px;width:56px;height:14px;overflow:hidden;"><div class="t" style="left:0px;top:-0.16px;font-size:12px;line-height:16px;color:#000;width:52px;text-align:right;transform:scaleX(0.9);transform-origin:right center;">1&#39;332&#39;116</div></div><div style="left:586px;top:195px;width:55px;height:14px;overflow:hidden;"><div class="t" style="left:0px;top:-0.16px;font-size:12px;line-height:16px;color:#000;width:51px;text-align:right;transform:scaleX(0.9);transform-origin:right center;">700&#39;117</div></div><div style="left:642px;top:195px;width:65px;height:14px;overflow:hidden;"><div class="t" style="left:0px;top:-0.16px;font-size:12px;line-height:16px;color:#000;width:61px;text-align:right;transform:scaleX(0.9);transform-origin:right center;">1&#39;920&#39;021</div></div><div style="left:708px;top:195px;width:49px;height:14px;overflow:hidden;"><div class="t" style="left:0px;top:-0.16px;font-size:12px;line-height:16px;color:#000;width:45px;text-align:right;transform:scaleX(0.9);transform-origin:right center;">0</div></div><div style="left:758px;top:195px;width:57px;height:14px;overflow:hidden;"><div class="t" style="left:0px;top:-0.16px;font-size:12px;line-height:16px;color:#000;width:53px;text-align:right;transform:scaleX(0.9);transform-origin:right center;">0</div></div><div style="left:816px;top:195px;width:61px;height:14px;overflow:hidden;"><div class="t" style="left:0px;top:-0.16px;font-size:12px;line-height:16px;color:#000;width:57px;text-align:right;transform:scaleX(0.9);transform-origin:right center;">1&#39;976&#39;086</div></div><div style="left:878px;top:195px;width:55px;height:14px;overflow:hidden;"><div class="t" style="left:0px;top:-0.16px;font-size:12px;line-height:16px;color:#000;width:51px;text-align:right;transform:scaleX(0.9);transform-origin:right center;">0</div></div><div style="left:934px;top:195px;width:55px;height:14px;overflow:hidden;"><div class="t" style="left:0px;top:-0.16px;font-size:12px;line-height:16px;color:#000;width:51px;text-align:right;transform:scaleX(0.9);transform-origin:right center;">0</div></div><div style="left:0px;top:210px;width:18px;height:15px;background:#000;"></div><div style="left:0px;top:210px;width:18px;height:14px;background:#d4d0c8;box-shadow:inset 1px 1px 0 #fff;"></div><div style="left:19px;top:224px;width:964px;height:1px;background:#c0c0c0;"></div><div style="left:19px;top:210px;width:236px;height:14px;overflow:hidden;"><div class="t" style="left:15px;top:-0.16px;font-size:12px;line-height:16px;color:#000;transform:scaleX(0.926);transform-origin:left center;">+ 01.13 Невыполненные обязяательства за</div></div><div class="t" style="left:257px;top:209.84px;font-size:12px;line-height:16px;color:#000;width:11.5px;text-align:center;transform:scaleX(0.9);transform-origin:center center;">-</div><div style="left:271px;top:210px;width:65px;height:14px;overflow:hidden;"><div class="t" style="left:0px;top:-0.16px;font-size:12px;line-height:16px;color:#000;width:61px;text-align:right;transform:scaleX(0.9);transform-origin:right center;">624&#39;999</div></div><div style="left:337px;top:210px;width:64px;height:14px;overflow:hidden;"><div class="t" style="left:0px;top:-0.16px;font-size:12px;line-height:16px;color:#000;width:60px;text-align:right;transform:scaleX(0.9);transform-origin:right center;">203&#39;125</div></div><div style="left:402px;top:210px;width:65px;height:14px;overflow:hidden;"><div class="t" style="left:0px;top:-0.16px;font-size:12px;line-height:16px;color:#000;width:61px;text-align:right;transform:scaleX(0.9);transform-origin:right center;">408&#39;440</div></div><div style="left:468px;top:210px;width:60px;height:14px;overflow:hidden;"><div class="t" style="left:0px;top:-0.16px;font-size:12px;line-height:16px;color:#000;width:56px;text-align:right;transform:scaleX(0.9);transform-origin:right center;">624&#39;999</div></div><div style="left:529px;top:210px;width:56px;height:14px;overflow:hidden;"><div class="t" style="left:0px;top:-0.16px;font-size:12px;line-height:16px;color:#000;width:52px;text-align:right;transform:scaleX(0.9);transform-origin:right center;">0</div></div><div style="left:586px;top:210px;width:55px;height:14px;overflow:hidden;"><div class="t" style="left:0px;top:-0.16px;font-size:12px;line-height:16px;color:#000;width:51px;text-align:right;transform:scaleX(0.9);transform-origin:right center;">0</div></div><div style="left:642px;top:210px;width:65px;height:14px;overflow:hidden;"><div class="t" style="left:0px;top:-0.16px;font-size:12px;line-height:16px;color:#000;width:61px;text-align:right;transform:scaleX(0.9);transform-origin:right center;">624&#39;999</div></div><div style="left:708px;top:210px;width:49px;height:14px;overflow:hidden;"><div class="t" style="left:0px;top:-0.16px;font-size:12px;line-height:16px;color:#ff0000;width:45px;text-align:right;transform:scaleX(0.9);transform-origin:right center;">653&#39;230</div></div><div style="left:758px;top:210px;width:57px;height:14px;overflow:hidden;"><div class="t" style="left:0px;top:-0.16px;font-size:12px;line-height:16px;color:#000;width:53px;text-align:right;transform:scaleX(0.9);transform-origin:right center;">0</div></div><div style="left:816px;top:210px;width:61px;height:14px;overflow:hidden;"><div class="t" style="left:0px;top:-0.16px;font-size:12px;line-height:16px;color:#000;width:57px;text-align:right;transform:scaleX(0.9);transform-origin:right center;">625&#39;003</div></div><div style="left:878px;top:210px;width:55px;height:14px;overflow:hidden;"><div class="t" style="left:0px;top:-0.16px;font-size:12px;line-height:16px;color:#ff0000;width:51px;text-align:right;transform:scaleX(0.9);transform-origin:right center;">1&#39;959&#39;690</div></div><div style="left:934px;top:210px;width:55px;height:14px;overflow:hidden;"><div class="t" style="left:0px;top:-0.16px;font-size:12px;line-height:16px;color:#000;width:51px;text-align:right;transform:scaleX(0.9);transform-origin:right center;">0</div></div><div style="left:0px;top:225px;width:18px;height:15px;background:#000;"></div><div style="left:0px;top:225px;width:18px;height:14px;background:#d4d0c8;box-shadow:inset 1px 1px 0 #fff;"></div><div style="left:19px;top:239px;width:964px;height:1px;background:#c0c0c0;"></div><div style="left:19px;top:225px;width:236px;height:14px;overflow:hidden;"><div class="t" style="left:3px;top:-0.16px;font-size:12px;line-height:16px;color:#000;transform:scaleX(0.912);transform-origin:left center;">+ 02 Доходы</div></div><div class="t" style="left:257px;top:224.84px;font-size:12px;line-height:16px;color:#000;width:11.5px;text-align:center;transform:scaleX(0.9);transform-origin:center center;">+</div><div style="left:271px;top:225px;width:65px;height:14px;overflow:hidden;"><div class="t" style="left:0px;top:-0.16px;font-size:12px;line-height:16px;color:#000;width:61px;text-align:right;transform:scaleX(0.9);transform-origin:right center;">9&#39;239&#39;527</div></div><div style="left:337px;top:225px;width:64px;height:14px;overflow:hidden;"><div class="t" style="left:0px;top:-0.16px;font-size:12px;line-height:16px;color:#000;width:60px;text-align:right;transform:scaleX(0.9);transform-origin:right center;">7&#39;213&#39;207</div></div><div style="left:402px;top:225px;width:65px;height:14px;overflow:hidden;"><div class="t" style="left:0px;top:-0.16px;font-size:12px;line-height:16px;color:#000;width:61px;text-align:right;transform:scaleX(0.9);transform-origin:right center;">7&#39;676&#39;954</div></div><div style="left:468px;top:225px;width:60px;height:14px;overflow:hidden;"><div class="t" style="left:0px;top:-0.16px;font-size:12px;line-height:16px;color:#000;width:56px;text-align:right;transform:scaleX(0.9);transform-origin:right center;">10&#39;088&#39;489</div></div><div style="left:529px;top:225px;width:56px;height:14px;overflow:hidden;"><div class="t" style="left:0px;top:-0.16px;font-size:12px;line-height:16px;color:#000;width:52px;text-align:right;transform:scaleX(0.9);transform-origin:right center;">8&#39;617&#39;979</div></div><div style="left:586px;top:225px;width:55px;height:14px;overflow:hidden;"><div class="t" style="left:0px;top:-0.16px;font-size:12px;line-height:16px;color:#000;width:51px;text-align:right;transform:scaleX(0.9);transform-origin:right center;">3&#39;600&#39;216</div></div><div style="left:642px;top:225px;width:65px;height:14px;overflow:hidden;"><div class="t" style="left:0px;top:-0.16px;font-size:12px;line-height:16px;color:#000;width:61px;text-align:right;transform:scaleX(0.9);transform-origin:right center;">11&#39;192&#39;947</div></div><div style="left:708px;top:225px;width:49px;height:14px;overflow:hidden;"><div class="t" style="left:0px;top:-0.16px;font-size:12px;line-height:16px;color:#000;width:45px;text-align:right;transform:scaleX(0.9);transform-origin:right center;">0</div></div><div style="left:758px;top:225px;width:57px;height:14px;overflow:hidden;"><div class="t" style="left:0px;top:-0.16px;font-size:12px;line-height:16px;color:#000;width:53px;text-align:right;transform:scaleX(0.9);transform-origin:right center;">0</div></div><div style="left:816px;top:225px;width:61px;height:14px;overflow:hidden;"><div class="t" style="left:0px;top:-0.16px;font-size:12px;line-height:16px;color:#000;width:57px;text-align:right;transform:scaleX(0.9);transform-origin:right center;">11&#39;607&#39;463</div></div><div style="left:878px;top:225px;width:55px;height:14px;overflow:hidden;"><div class="t" style="left:0px;top:-0.16px;font-size:12px;line-height:16px;color:#000;width:51px;text-align:right;transform:scaleX(0.9);transform-origin:right center;">0</div></div><div style="left:934px;top:225px;width:55px;height:14px;overflow:hidden;"><div class="t" style="left:0px;top:-0.16px;font-size:12px;line-height:16px;color:#000;width:51px;text-align:right;transform:scaleX(0.9);transform-origin:right center;">0</div></div><div style="left:256px;top:15px;width:1px;height:225px;background:#c0c0c0;"></div><div style="left:270px;top:15px;width:1px;height:225px;background:#000;"></div><div style="left:336px;top:15px;width:1px;height:225px;background:#c0c0c0;"></div><div style="left:401px;top:15px;width:1px;height:225px;background:#c0c0c0;"></div><div style="left:467px;top:15px;width:1px;height:225px;background:#c0c0c0;"></div><div style="left:528px;top:15px;width:1px;height:225px;background:#c0c0c0;"></div><div style="left:585px;top:15px;width:1px;height:225px;background:#c0c0c0;"></div><div style="left:641px;top:15px;width:1px;height:225px;background:#c0c0c0;"></div><div style="left:707px;top:15px;width:1px;height:225px;background:#c0c0c0;"></div><div style="left:757px;top:15px;width:1px;height:225px;background:#c0c0c0;"></div><div style="left:815px;top:15px;width:1px;height:225px;background:#c0c0c0;"></div><div style="left:877px;top:15px;width:1px;height:225px;background:#c0c0c0;"></div><div style="left:933px;top:15px;width:1px;height:225px;background:#c0c0c0;"></div><div style="left:989px;top:15px;width:1px;height:225px;background:#c0c0c0;"></div><div style="left:18px;top:0px;width:1px;height:240px;background:#000;"></div><svg style="left:7px;top:17px;" width="6" height="11" viewBox="0 0 6 11" shape-rendering="crispEdges"><path d="M0 0h1v11h-1zM1 1h1v9h-1zM2 2h1v7h-1zM3 3h1v5h-1zM4 4h1v3h-1zM5 5h1v1h-1z" fill="#000"/></svg></div>
<div style="left:17px;top:421px;width:983px;height:17px;background:#d4d0c8;"></div>
<div class="t" style="left:22px;top:423.69px;font-size:11px;line-height:15px;color:#000;letter-spacing:-0.022px;">Запись:</div>
<div style="left:67px;top:423px;width:20px;height:15px;background:#d4d0c8;box-shadow:inset 1px 1px 0 #fff,inset -1px -1px 0 #404040,inset -2px -2px 0 #808080;"><svg style="left:0px;top:0px;" width="20" height="15" viewBox="0 0 20 15" shape-rendering="crispEdges"><rect x="5" y="4" width="2" height="7" fill="#000"/><path d="M11 4h1v7h-1zM10 5h1v5h-1zM9 6h1v3h-1zM8 7h1v1h-1z" fill="#000"/></svg></div>
<div style="left:87px;top:423px;width:20px;height:15px;background:#d4d0c8;box-shadow:inset 1px 1px 0 #fff,inset -1px -1px 0 #404040,inset -2px -2px 0 #808080;"><svg style="left:0px;top:0px;" width="20" height="15" viewBox="0 0 20 15" shape-rendering="crispEdges"><path d="M10 4h1v7h-1zM9 5h1v5h-1zM8 6h1v3h-1zM7 7h1v1h-1z" fill="#808080"/></svg></div>
<div style="left:111px;top:422px;width:64px;height:16px;background:#fff;box-shadow:inset 1px 1px 0 #808080,inset 2px 2px 0 #000,inset -1px -1px 0 #fff;"></div>
<div class="t" style="left:113px;top:423.69px;font-size:11px;line-height:15px;color:#000;width:59px;text-align:right;">1</div>
<div style="left:179px;top:423px;width:20px;height:15px;background:#d4d0c8;box-shadow:inset 1px 1px 0 #fff,inset -1px -1px 0 #404040,inset -2px -2px 0 #808080;"><svg style="left:0px;top:0px;" width="20" height="15" viewBox="0 0 20 15" shape-rendering="crispEdges"><path d="M7 4h1v7h-1zM8 5h1v5h-1zM9 6h1v3h-1zM10 7h1v1h-1z" fill="#000"/></svg></div>
<div style="left:199px;top:423px;width:20px;height:15px;background:#d4d0c8;box-shadow:inset 1px 1px 0 #fff,inset -1px -1px 0 #404040,inset -2px -2px 0 #808080;"><svg style="left:0px;top:0px;" width="20" height="15" viewBox="0 0 20 15" shape-rendering="crispEdges"><path d="M5 4h1v7h-1zM6 5h1v5h-1zM7 6h1v3h-1zM8 7h1v1h-1z" fill="#000"/><rect x="11" y="4" width="2" height="7" fill="#000"/></svg></div>
<div style="left:219px;top:423px;width:20px;height:15px;background:#d4d0c8;box-shadow:inset 1px 1px 0 #fff,inset -1px -1px 0 #404040,inset -2px -2px 0 #808080;"><svg style="left:0px;top:0px;" width="20" height="15" viewBox="0 0 20 15" shape-rendering="crispEdges"><path d="M4 5h1v7h-1zM5 6h1v5h-1zM6 7h1v3h-1zM7 8h1v1h-1z" fill="#fff"/><path d="M3 4h1v7h-1zM4 5h1v5h-1zM5 6h1v3h-1zM6 7h1v1h-1z" fill="#808080"/><path d="M13.500 4v7M10 7.500h7M11 5l5 5M16 5l-5 5" stroke="#808080" stroke-width="1" fill="none"/></svg></div>
<div style="left:239px;top:423px;width:20px;height:15px;background:#d4d0c8;box-shadow:inset 1px 1px 0 #fff,inset -1px -1px 0 #404040,inset -2px -2px 0 #808080;"><svg style="left:0px;top:0px;" width="20" height="15" viewBox="0 0 20 15" shape-rendering="crispEdges"><path d="M6 3h7l3 3v3l-3 3h-7l-3-3v-3z" fill="#808080"/><path d="M7 5l5 5M12 5l-5 5" stroke="#fff" stroke-width="1.600" fill="none" shape-rendering="geometricPrecision"/></svg></div>
<div style="left:259px;top:423px;width:20px;height:15px;background:#d4d0c8;box-shadow:inset 1px 1px 0 #fff,inset -1px -1px 0 #404040,inset -2px -2px 0 #808080;"><svg style="left:0px;top:0px;" width="20" height="15" viewBox="0 0 20 15" shape-rendering="crispEdges"><path d="M3 3h1v7h-1zM4 4h1v5h-1zM5 5h1v3h-1zM6 6h1v1h-1z" fill="#000"/><rect x="9" y="3" width="2" height="7" fill="#000"/><path d="M9 11h2v1h-2zM12 11h1v1h-1zM14 11h1v1h-1z" fill="#000"/></svg></div>
<div class="t" style="left:284px;top:423.69px;font-size:11px;line-height:15px;color:#000;">из  15</div>
<div style="left:431px;top:422px;width:569px;height:16px;background:#e9e7e3;background-image:repeating-conic-gradient(#fff 0% 25%, #d4d0c8 0% 50%);background-size:2px 2px;"></div>
<div style="left:431px;top:422px;width:16px;height:16px;background:#d4d0c8;box-shadow:inset 1px 1px 0 #d4d0c8,inset -1px -1px 0 #404040,inset 2px 2px 0 #fff,inset -2px -2px 0 #808080;"><svg style="left:0px;top:0px;" width="16" height="16" viewBox="0 0 16 16" shape-rendering="crispEdges"><path d="M8 4h1v7h-1zM7 5h1v5h-1zM6 6h1v3h-1zM5 7h1v1h-1z" fill="#000"/></svg></div>
<div style="left:447px;top:422px;width:228px;height:16px;background:#d4d0c8;box-shadow:inset 1px 1px 0 #d4d0c8,inset -1px -1px 0 #404040,inset 2px 2px 0 #fff,inset -2px -2px 0 #808080;"></div>
<div style="left:984px;top:422px;width:16px;height:16px;background:#d4d0c8;box-shadow:inset 1px 1px 0 #d4d0c8,inset -1px -1px 0 #404040,inset 2px 2px 0 #fff,inset -2px -2px 0 #808080;"><svg style="left:0px;top:0px;" width="16" height="16" viewBox="0 0 16 16" shape-rendering="crispEdges"><path d="M6 4h1v7h-1zM7 5h1v5h-1zM8 6h1v3h-1zM9 7h1v1h-1z" fill="#000"/></svg></div>
<div style="left:205px;top:670px;width:583px;height:44px;background:#6e6e6e;"></div>
<div style="left:207px;top:672px;width:579px;height:40px;background:#dbd8d1;border-radius:2px;"></div>
<div style="left:208px;top:673px;width:577px;height:15px;background:#808080;"></div>
<div class="t" style="left:209px;top:672.69px;font-size:11px;line-height:15px;color:#fff;font-weight:700;transform:scaleX(1.06);transform-origin:left center;">Режим формы</div>
<svg style="left:758px;top:678px;" width="7" height="4" viewBox="0 0 7 4" shape-rendering="crispEdges"><path d="M0 0h7v1h-7zM1 1h5v1h-5zM2 2h3v1h-3zM3 3h1v1h-1z" fill="#fff"/></svg>
<svg style="left:774px;top:677px;" width="8" height="7" viewBox="0 0 8 7" shape-rendering="geometricPrecision"><path d="M0.500 0.300l7 6.400M7.500 0.300l-7 6.400" stroke="#fff" stroke-width="1.4" fill="none"/></svg>
<div style="left:256px;top:689px;width:1px;height:22px;background:#a6a398;"></div>
<div style="left:331px;top:689px;width:1px;height:22px;background:#a6a398;"></div>
<div style="left:406px;top:689px;width:1px;height:22px;background:#a6a398;"></div>
<div style="left:435px;top:689px;width:1px;height:22px;background:#a6a398;"></div>
<div style="left:487px;top:689px;width:1px;height:22px;background:#a6a398;"></div>
<div style="left:585px;top:689px;width:1px;height:22px;background:#a6a398;"></div>
<div style="left:614px;top:689px;width:1px;height:22px;background:#a6a398;"></div>
<div style="left:666px;top:689px;width:1px;height:22px;background:#a6a398;"></div>
<div style="left:695px;top:689px;width:1px;height:22px;background:#a6a398;"></div>
<div style="left:758px;top:689px;width:1px;height:22px;background:#a6a398;"></div>
<svg style="left:212px;top:693px;" width="14" height="14" viewBox="0 0 14 14" shape-rendering="crispEdges"><path d="M0 0h14v14h-13l-1-1z" fill="#808080"/><rect x="3" y="1" width="8" height="5" fill="#dbd8d1"/><rect x="3" y="9" width="8" height="5" fill="#808080"/><rect x="8" y="10" width="2" height="3" fill="#dbd8d1"/><rect x="12" y="1" width="1" height="1" fill="#dbd8d1"/></svg>
<svg style="left:235px;top:693px;" width="16" height="15" viewBox="0 0 16 15" shape-rendering="crispEdges"><path d="M3 0h8l3 3v10h-11z" fill="#fff" stroke="#808080"/><rect x="0" y="2" width="3" height="3" fill="#d03030"/><rect x="3" y="2" width="3" height="3" fill="#3040c0"/><rect x="0" y="5" width="3" height="3" fill="#e0d020"/><rect x="3" y="5" width="3" height="3" fill="#30a040"/>
<circle cx="9" cy="9" r="3.500" fill="#a0ffff" stroke="#404040" shape-rendering="geometricPrecision"/><path d="M11.500 11.500l3.500 3" stroke="#d02020" stroke-width="2" shape-rendering="geometricPrecision"/></svg>
<svg style="left:263px;top:693px;" width="16" height="14" viewBox="0 0 16 14" shape-rendering="crispEdges"><path d="M4 0h8l-1 5h-8z" fill="#fff" stroke="#000" stroke-width="1"/><path d="M5 2h5M4.500 3.500h5" stroke="#808080"/>
<path d="M1 5h12l2 2v4l-2 2h-12l-1-1v-5z" fill="#d4d0c8" stroke="#000"/><path d="M0 8h15" stroke="#000"/><rect x="1" y="9" width="13" height="2" fill="#808080"/><rect x="7" y="9" width="3" height="1" fill="#ffff00"/><path d="M2 12h11" stroke="#fff"/></svg>
<svg style="left:286px;top:692px;" width="16" height="16" viewBox="0 0 16 16" shape-rendering="crispEdges"><path d="M1 0h8l3 3v11h-11z" fill="#fff" stroke="#000"/><circle cx="9.500" cy="8.500" r="3.500" fill="#a0e8f0" stroke="#404040" shape-rendering="geometricPrecision"/><path d="M12 11l3.500 3.500" stroke="#202020" stroke-width="2" shape-rendering="geometricPrecision"/></svg>
<svg style="left:309px;top:692px;" width="16" height="16" viewBox="0 0 16 16" shape-rendering="geometricPrecision"><text x="0" y="6" font-family="Liberation Sans" font-size="6.500" font-weight="700" fill="#808080">ABC</text><path d="M2 10l3 4 9-11" stroke="#808080" stroke-width="1.5" fill="none"/></svg>
<svg style="left:340px;top:693px;" width="11" height="14" viewBox="0 0 11 14" shape-rendering="geometricPrecision"><path d="M2 0l5 9M9 0l-5 9" stroke="#808080" stroke-width="1.2" fill="none"/><circle cx="3" cy="11" r="2" fill="none" stroke="#808080"/><circle cx="8" cy="11" r="2" fill="none" stroke="#808080"/></svg>
<svg style="left:361px;top:693px;" width="16" height="14" viewBox="0 0 16 14" shape-rendering="crispEdges"><path d="M0.500 0.500h5l2 2v8h-7z" fill="#fff" stroke="#202020"/><path d="M2 3.500h4M2 5.500h4M2 7.500h3" stroke="#202020"/><path d="M6.500 3.500h5l3 3v6h-8z" fill="#fff" stroke="#3030a0"/><path d="M8 7.500h5M8 9.500h5M8 11.500h4" stroke="#202020"/></svg>
<svg style="left:384px;top:693px;" width="16" height="15" viewBox="0 0 16 15" shape-rendering="crispEdges"><rect x="0" y="1" width="13" height="12" rx="2" fill="#808080"/><rect x="4" y="0" width="5" height="2" fill="#808080"/><rect x="6.500" y="6.500" width="9" height="7" fill="#dbd8d1" stroke="#808080"/><path d="M8 9.500h6M8 11.500h4" stroke="#808080"/></svg>
<svg style="left:414px;top:695px;" width="14" height="9" viewBox="0 0 14 9" shape-rendering="geometricPrecision"><path d="M1 1v5h5z" fill="#808080"/><path d="M3 5q4-5 8-2q3 3-1 5" stroke="#808080" stroke-width="1.5" fill="none"/></svg>
<svg style="left:443px;top:692px;" width="15" height="16" viewBox="0 0 15 16" shape-rendering="geometricPrecision"><text x="3.500" y="7" text-anchor="middle" font-family="Liberation Serif" font-weight="700" font-size="10.500" fill="#3c3cc8">A</text><text x="3.500" y="15" text-anchor="middle" font-family="Liberation Serif" font-weight="700" font-size="10.500" fill="#b03030">Я</text><path d="M11 0h1v11h-1zM9 10h5v1h-5zM9 11h5v1h-5zM10 12h3v1h-3zM10 13h3v1h-3zM11 14h1v1h-1z" fill="#383838" shape-rendering="crispEdges"/></svg>
<svg style="left:466px;top:692px;" width="15" height="16" viewBox="0 0 15 16" shape-rendering="geometricPrecision"><text x="3.500" y="7" text-anchor="middle" font-family="Liberation Serif" font-weight="700" font-size="10.500" fill="#b03030">Я</text><text x="3.500" y="15" text-anchor="middle" font-family="Liberation Serif" font-weight="700" font-size="10.500" fill="#3c3cc8">A</text><path d="M11 0h1v11h-1zM9 10h5v1h-5zM9 11h5v1h-5zM10 12h3v1h-3zM10 13h3v1h-3zM11 14h1v1h-1z" fill="#383838" shape-rendering="crispEdges"/></svg>
<svg style="left:494px;top:692px;" width="17" height="16" viewBox="0 0 17 16" shape-rendering="crispEdges"><path d="M0 0h11l-4 5v4h-3v-4z" fill="#fff" stroke="#303030"/><path d="M2 1h7l-3 3h-1z" fill="#40a0b0"/><path d="M13 3l-6 6h3l-4 6 9-8h-4l4-4z" fill="#ffff30" stroke="#404040" stroke-width=".6" shape-rendering="geometricPrecision"/></svg>
<svg style="left:517px;top:692px;" width="17" height="16" viewBox="0 0 17 16" shape-rendering="crispEdges"><path d="M0 0h11l-4 5v4h-3v-4z" fill="#fff" stroke="#303030"/><path d="M2 1h7l-3 3h-1z" fill="#40a0b0"/><rect x="5" y="4" width="11" height="11" fill="#fff" stroke="#202020"/><rect x="5" y="4" width="11" height="2" fill="#3030a0"/><path d="M7 8.500h3M7 11.500h3" stroke="#202020"/><rect x="11" y="7" width="3" height="3" fill="#fff" stroke="#202020"/><rect x="11" y="11" width="3" height="3" fill="#fff" stroke="#202020"/></svg>
<svg style="left:541px;top:694px;" width="15" height="11" viewBox="0 0 15 11" shape-rendering="crispEdges"><path d="M0.500 0.500h13l-5 5.500v4.500h-3v-4.500z" fill="none" stroke="#909090"/></svg>
<svg style="left:563px;top:692px;" width="17" height="16" viewBox="0 0 17 16" shape-rendering="crispEdges"><path d="M0.500 0.500h10l-4 4.500v6h-2v-6z" fill="none" stroke="#909090"/><rect x="6" y="4" width="10" height="11" fill="#dbd8d1" stroke="#909090"/><rect x="11" y="6" width="3" height="3" fill="none" stroke="#909090"/><rect x="11" y="10" width="3" height="3" fill="none" stroke="#909090"/><path d="M0 10h3v-2l3 3.500-3 3.500v-2h-3z" fill="#909090"/></svg>
<svg style="left:592px;top:692px;" width="16" height="14" viewBox="0 0 16 14" shape-rendering="crispEdges"><path d="M3 0h3v3h1v2h2v-2h1v-3h3v3l2 5v6h-5v-5h-4v5h-5v-6l2-5z" fill="#303030"/><rect x="1" y="10" width="2" height="3" fill="#fff"/><rect x="11" y="10" width="2" height="3" fill="#fff"/><rect x="4" y="1" width="1" height="2" fill="#fff"/><rect x="11" y="1" width="1" height="2" fill="#fff"/></svg>
<svg style="left:622px;top:695px;" width="15" height="10" viewBox="0 0 15 10" shape-rendering="geometricPrecision"><path d="M0 0l5 5-5 5z" fill="#808080"/><path d="M10.500 1v8M6.500 5h8M8 2l5 6M13 2l-5 6" stroke="#808080" stroke-width="1" fill="none"/></svg>
<svg style="left:644px;top:693px;" width="15" height="12" viewBox="0 0 15 12" shape-rendering="geometricPrecision"><path d="M0 2l5 5-5 5z" fill="#808080"/><path d="M5 3l8 9M14 1l-9 10" stroke="#808080" stroke-width="2.200" fill="none"/></svg>
<svg style="left:673px;top:692px;" width="17" height="16" viewBox="0 0 17 16" shape-rendering="crispEdges"><rect x="1" y="4" width="11" height="11" fill="#fff" stroke="#202020" stroke-width="1"/><path d="M3 9.500h7M3 11.500h7M3 13.500h5" stroke="#202020"/><path d="M4 5l4-4h6v5l-3 1-3-2z" fill="#c0c0c0" stroke="#404040" stroke-width=".7" shape-rendering="geometricPrecision"/><rect x="14" y="0" width="2" height="7" fill="#2030b0"/></svg>
<svg style="left:702px;top:692px;" width="17" height="16" viewBox="0 0 17 16" shape-rendering="crispEdges"><rect x="2.500" y="0.500" width="11" height="9" fill="#fff" stroke="#303030"/><rect x="2" y="0" width="12" height="2" fill="#3030a0"/><rect x="0.500" y="5.500" width="10" height="9" fill="#fff" stroke="#303030"/><rect x="0" y="5" width="11" height="2" fill="#3030a0"/><rect x="5.500" y="3.500" width="11" height="9" fill="#fff" stroke="#303030"/><rect x="5" y="3" width="12" height="2" fill="#3030a0"/><path d="M7 7.500h3M11 7.500h4M7 9.500h3M11 9.500h4" stroke="#606060"/><path d="M2 9.500h2M2 11.500h2" stroke="#606060"/></svg>
<svg style="left:725px;top:692px;" width="17" height="16" viewBox="0 0 17 16" shape-rendering="crispEdges"><rect x="4.500" y="5.500" width="11" height="9" fill="#fff" stroke="#303030"/><rect x="4" y="5" width="12" height="2" fill="#3030a0"/><path d="M6 9h2v1h-2zM9 9h2v1h-2zM12 9h2v1h-2zM6 11h2v1h-2zM9 11h2v1h-2zM12 11h2v1h-2zM6 13h2v1h-2zM9 13h2v1h-2zM12 13h2v1h-2z" fill="#303030"/><path d="M4 0v7M0.500 3.500h7M1.500 1l5 5M6.500 1l-5 5" stroke="#f0e020" stroke-width="1" fill="none" shape-rendering="geometricPrecision"/></svg>
<svg style="left:747px;top:700px;" width="5" height="3" viewBox="0 0 5 3" shape-rendering="crispEdges"><path d="M0 0h5v1h-5zM1 1h3v1h-3zM2 2h1v1h-1z" fill="#000"/></svg>
<svg style="left:766px;top:692px;" width="15" height="16" viewBox="0 0 15 16" shape-rendering="crispEdges"><path d="M1 0h12l1 1v10l-1 1h-3v3l-3-3h-6l-1-1v-10z" fill="#ffffd0" stroke="#303030" stroke-width="1"/><text x="3.500" y="10" font-family="Liberation Sans" font-weight="700" font-size="11" fill="#3030a0" shape-rendering="geometricPrecision">?</text></svg>
<div style="left:9px;top:721px;width:741px;height:16px;border:1px solid #e2dfd9;"></div>
<div style="left:768px;top:721px;width:31px;height:16px;border:1px solid #e2dfd9;"></div>
<div style="left:802px;top:721px;width:25px;height:16px;border:1px solid #e2dfd9;"></div>
<div style="left:830px;top:721px;width:25px;height:16px;border:1px solid #e2dfd9;"></div>
<div style="left:858px;top:721px;width:30px;height:16px;border:1px solid #e2dfd9;"></div>
<div style="left:891px;top:721px;width:32px;height:16px;border:1px solid #e2dfd9;"></div>
<div style="left:926px;top:721px;width:26px;height:16px;border:1px solid #e2dfd9;"></div>
<div style="left:955px;top:721px;width:29px;height:16px;border:1px solid #e2dfd9;"></div>
<div style="left:987px;top:721px;width:29px;height:16px;border:1px solid #e2dfd9;"></div>
<div class="t" style="left:10px;top:721.69px;font-size:11px;line-height:15px;color:#000;">Режим таблицы</div>
<div style="left:0px;top:739px;width:1024px;height:1px;background:#fff;"></div>
<div style="left:2px;top:742px;width:52px;height:22px;background:#d4d0c8;box-shadow:inset 1px 1px 0 #fff,inset -1px -1px 0 #404040,inset -2px -2px 0 #808080;"></div>
<svg style="left:4px;top:745px;" width="16" height="14" viewBox="0 0 16 14" shape-rendering="geometricPrecision"><path d="M1 2q3-2 6 0l-1 5q-3-2-6 0z" fill="#e8502c"/><path d="M8 2q3 2 7-1l-1 5q-3 3-7 1z" fill="#6cb82c"/><path d="M0 8q3-2 6 0l-1 5q-3-2-6 0z" fill="#3c74e0"/><path d="M7 8q3 2 7-1l-1 5q-3 3-7 1z" fill="#f4c01c"/></svg>
<div class="t" style="left:21px;top:745.69px;font-size:11px;line-height:15px;color:#000;font-weight:700;transform:scaleX(1.09);transform-origin:left center;">Пуск</div>
<svg style="left:61px;top:746px;" width="16" height="16" viewBox="0 0 16 16" shape-rendering="crispEdges"><rect x="0" y="0" width="16" height="16" fill="#80800c"/><circle cx="8" cy="8" r="5" fill="none" stroke="#fff" stroke-width="2" shape-rendering="geometricPrecision"/><path d="M8 5v3.500h3" stroke="#fff" stroke-width="1.5" fill="none"/><path d="M1 1h3v1h-2v2h-1zM15 1h-3v1h2v2h1zM1 15h3v-1h-2v-2h-1zM15 15h-3v-1h2v-2h1z" fill="#fff"/></svg>
<svg style="left:84px;top:745px;" width="17" height="17" viewBox="0 0 17 17" shape-rendering="geometricPrecision"><text x="1" y="15" font-family="Liberation Sans" font-weight="700" font-size="19" fill="#2a7fe0">e</text><path d="M1 11q-1 3 3 1q6-3 10-8q2-4-3-2" stroke="#5aa8f0" stroke-width="1.500" fill="none"/></svg>
<svg style="left:107px;top:746px;" width="16" height="16" viewBox="0 0 16 16" shape-rendering="geometricPrecision"><circle cx="8" cy="8" r="7.500" fill="#e8e8f0"/><path d="M8 8l-7.500 0a7.500 7.500 0 0 1 7.500-7.500z" fill="#e04020"/><path d="M8 8l0-7.500a7.500 7.500 0 0 1 7.500 7.500z" fill="#40a030"/><path d="M8 8l7.500 0a7.500 7.500 0 0 1-7.500 7.500z" fill="#f0c020"/><path d="M8 8l0 7.500a7.500 7.500 0 0 1-7.500-7.500z" fill="#3060d0"/><circle cx="8" cy="8" r="4.500" fill="#f4f4f8"/><path d="M6.500 5l4 3-4 3z" fill="#202020"/></svg>
<svg style="left:134px;top:747px;" width="8" height="6" viewBox="0 0 8 6" shape-rendering="geometricPrecision"><path d="M0.700 0.500L3.200 3L0.700 5.500M4.700 0.500L7.200 3L4.700 5.500" stroke="#000" stroke-width="1.500" fill="none"/></svg>
<div style="left:147px;top:742px;width:160px;height:22px;background:#d4d0c8;box-shadow:inset 1px 1px 0 #fff,inset -1px -1px 0 #404040,inset -2px -2px 0 #808080;"></div><svg style="left:152px;top:745px;" width="16" height="16" viewBox="0 0 16 16" shape-rendering="geometricPrecision"><path d="M7 1l6.500 6-6.500 6.500h-6v-6.500z" fill="#e6e04a" stroke="#6a6a10" stroke-width="1"/><path d="M7 1.500l-5.500 5.500v2.500l7-7z" fill="#90901c"/><path d="M2 13l5 0 3-3-2.500 0z" fill="#a0a020"/><path d="M1.500 13l11-7.500" stroke="#fff" stroke-width="1.400"/><path d="M10 9l3-2.500" stroke="#505050" stroke-width="1"/><circle cx="7" cy="7.300" r="1.800" fill="#1010f0"/></svg><div class="t" style="left:170.3px;top:745.69px;font-size:11px;line-height:15px;color:#000;letter-spacing:0.064px;">Norton AntiVirus Corpora...</div>
<div style="left:310px;top:742px;width:160px;height:22px;background:#d4d0c8;box-shadow:inset 1px 1px 0 #fff,inset -1px -1px 0 #404040,inset -2px -2px 0 #808080;"></div><svg style="left:314px;top:745px;" width="16" height="16" viewBox="0 0 16 16" shape-rendering="crispEdges"><path d="M3.500 0.500h8l4 4v11h-12z" fill="#fff" stroke="#505050"/><path d="M11.500 0.500v4h4" fill="#e8e8e8" stroke="#202020"/><path d="M15.500 5v10.500h-11" stroke="#000" fill="none"/><path d="M10 7.500h4M10 9.500h4M10 11.500h4" stroke="#b0b0b0"/><rect x="0.500" y="2.500" width="9" height="9" fill="#fff" stroke="#0000e0" stroke-dasharray="1 1"/><rect x="1" y="3" width="8" height="1" fill="#0000e0"/><text x="0.800" y="10.500" font-family="Liberation Sans" font-weight="700" font-size="9" fill="#000080" shape-rendering="geometricPrecision">W</text></svg><div class="t" style="left:333.6px;top:745.69px;font-size:11px;line-height:15px;color:#000;letter-spacing:0.219px;">Диплом бюджетирован...</div>
<div style="left:473px;top:742px;width:160px;height:22px;background:#fff;background-image:repeating-conic-gradient(#fff 0% 25%, #d4d0c8 0% 50%);background-size:2px 2px;box-shadow:inset 1px 1px 0 #404040,inset -1px -1px 0 #fff,inset 2px 2px 0 #808080;"></div><svg style="left:478px;top:746px;" width="16" height="16" viewBox="0 0 16 16" shape-rendering="crispEdges"><rect x="0" y="0" width="16" height="16" fill="#6b0f43"/><rect x="2" y="2" width="12" height="12" fill="#fff"/>
<path d="M7 3h4v1h1v1h1v3h-1v1h-1v1h-2v1h-1v1h-1v1h-2v-1h-1v-2h1v-1h1v-1h1v-1h1v-1h-1v-2h1v-1h1z" fill="#7a0a3c"/>
<path d="M10 4h1v1h-1zM10 7h1v1h-1zM8 8h2v1h-2zM6 9h2v1h-2zM5 10h1v1h-1zM4 11h1v1h-1z" fill="#fff"/></svg><div class="t" style="left:498px;top:746.69px;font-size:11px;line-height:15px;color:#000;font-weight:700;transform:scaleX(1.07);transform-origin:left center;">BOSS [20.05.03] V 187</div>
<div style="left:936px;top:746px;width:16px;height:16px;background:#0a246a;"></div>
<div class="t" style="left:936.5px;top:746.69px;font-size:11px;line-height:15px;color:#fff;letter-spacing:-0.7px;">EN</div>
<div style="left:956px;top:742px;width:1px;height:24px;background:#808080;"></div>
<div style="left:957px;top:742px;width:1px;height:24px;background:#fff;"></div>
<div style="left:963px;top:742px;width:59px;height:24px;box-shadow:inset 1px 1px 0 #808080,inset -1px -1px 0 #fff;"></div>
<svg style="left:968px;top:751px;" width="8" height="6" viewBox="0 0 8 6" shape-rendering="geometricPrecision"><path d="M3.300 0.500L0.800 3L3.300 5.500M7.300 0.500L4.800 3L7.300 5.500" stroke="#000" stroke-width="1.500" fill="none"/></svg>
<div class="t" style="left:986px;top:746.69px;font-size:11px;line-height:15px;color:#000;">18:16</div>
</div>
</body></html>
